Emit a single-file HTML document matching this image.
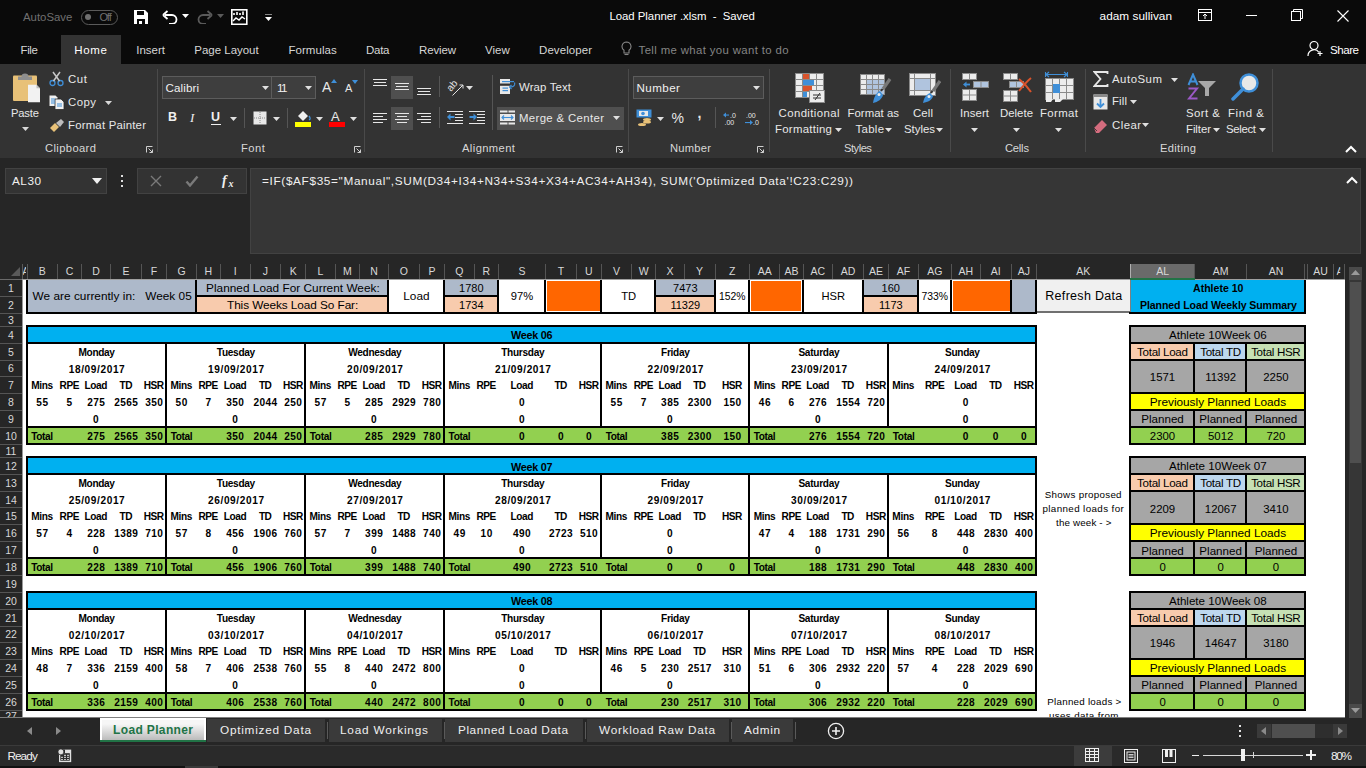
<!DOCTYPE html>
<html><head><meta charset="utf-8"><title>Load Planner .xlsm - Saved</title>
<style>
html,body{margin:0;padding:0;}
body{width:1366px;height:768px;overflow:hidden;position:relative;background:#262626;font-family:"Liberation Sans",sans-serif;}
.t{position:absolute;white-space:pre;}
.r{position:absolute;}
</style></head><body>
<div class="r" style="left:0.00px;top:0.00px;width:1366.00px;height:64.00px;background:#0a0a0a;"></div>
<div class="t" style="left:23.00px;top:11.16px;font-size:11.4px;line-height:13.68px;color:#707070;">AutoSave</div>
<div class="r" style="left:80.50px;top:9.50px;width:37.00px;height:15.00px;background:transparent;border:1px solid #5a5a5a;border-radius:8px;box-sizing:border-box;"></div>
<div class="r" style="left:85.00px;top:14.00px;width:6.00px;height:6.00px;background:#707070;border-radius:50%;"></div>
<div class="t" style="left:99.40px;top:10.90px;font-size:11px;line-height:13.20px;color:#707070;letter-spacing:-1.085px;">Off</div>
<svg class="r" style="left:133px;top:9px" width="16" height="16" viewBox="0 0 16 16"><path d="M1 1h11l3 3v11H1z" fill="#fff"/><rect x="4" y="2" width="7" height="4" fill="#0a0a0a"/><rect x="4" y="10" width="8" height="5" fill="#0a0a0a"/><rect x="6" y="12" width="3" height="3" fill="#fff"/></svg>
<svg class="r" style="left:162px;top:10px" width="16" height="14" viewBox="0 0 16 14"><path d="M3 5h7a4.5 4.5 0 0 1 0 9H7" stroke="#fff" stroke-width="1.8" fill="none"/><path d="M1 5l4.5-4M1 5l4.5 4" stroke="#fff" stroke-width="1.8" fill="none"/></svg>
<svg class="r" style="left:182px;top:14px" width="7" height="4" viewBox="0 0 7 4"><path d="M0 0h7L3.5 4z" fill="#fff"/></svg>
<svg class="r" style="left:197px;top:10px" width="16" height="14" viewBox="0 0 16 14"><path d="M13 5H6a4.5 4.5 0 0 0 0 9h3" stroke="#5a5a5a" stroke-width="1.8" fill="none"/><path d="M15 5l-4.5-4M15 5l-4.5 4" stroke="#5a5a5a" stroke-width="1.8" fill="none"/></svg>
<svg class="r" style="left:217px;top:14px" width="7" height="4" viewBox="0 0 7 4"><path d="M0 0h7L3.5 4z" fill="#5a5a5a"/></svg>
<svg class="r" style="left:231px;top:9px" width="17" height="16" viewBox="0 0 17 16"><rect x="0.8" y="0.8" width="15" height="14.5" fill="none" stroke="#fff" stroke-width="1.6"/><path d="M3 6V4M6 6V3M9 6V4M12 6V2.5" stroke="#fff" stroke-width="1.6"/><path d="M2 12l3-3 3 2 3-3 3 2" stroke="#fff" stroke-width="1.4" fill="none"/></svg>
<svg class="r" style="left:265px;top:14px" width="7" height="7" viewBox="0 0 7 7"><path d="M0 0h7" stroke="#fff" stroke-width="1"/><path d="M0 3h7L3.5 7z" fill="#fff"/></svg>
<div class="t" style="left:609.40px;top:9.66px;font-size:11.4px;line-height:13.68px;color:#ffffff;letter-spacing:-0.029px;">Load Planner .xlsm  -  Saved</div>
<div class="t" style="left:1099.60px;top:9.42px;font-size:11.8px;line-height:14.16px;color:#ffffff;letter-spacing:0.021px;">adam sullivan</div>
<svg class="r" style="left:1198px;top:9px" width="14" height="12" viewBox="0 0 14 12"><rect x="0.5" y="0.5" width="13" height="11" fill="none" stroke="#fff"/><path d="M0.5 3.5h13M7 10V5M5 7l2-2 2 2" stroke="#fff" fill="none"/></svg>
<div class="r" style="left:1245.50px;top:15.00px;width:11.00px;height:1.00px;background:#fff;"></div>
<svg class="r" style="left:1291px;top:9px" width="12" height="12" viewBox="0 0 12 12"><rect x="0.5" y="2.5" width="9" height="9" fill="none" stroke="#fff"/><path d="M2.5 2.5V0.5h9v9h-2" stroke="#fff" fill="none"/></svg>
<svg class="r" style="left:1337px;top:10px" width="12" height="12" viewBox="0 0 12 12"><path d="M0.5 0.5l11 11M11.5 0.5l-11 11" stroke="#fff" stroke-width="1.1"/></svg>
<div class="r" style="left:61.00px;top:35.00px;width:60.00px;height:29.00px;background:#333333;"></div>
<div class="t" style="left:20.50px;top:43.90px;font-size:11.5px;line-height:13.80px;color:#d6d6d6;letter-spacing:-0.377px;">File</div>
<div class="t" style="left:74.20px;top:43.90px;font-size:11.5px;line-height:13.80px;color:#ffffff;letter-spacing:0.708px;">Home</div>
<div class="t" style="left:136.30px;top:43.90px;font-size:11.5px;line-height:13.80px;color:#d6d6d6;letter-spacing:-0.012px;">Insert</div>
<div class="t" style="left:194.30px;top:43.90px;font-size:11.5px;line-height:13.80px;color:#d6d6d6;letter-spacing:-0.018px;">Page Layout</div>
<div class="t" style="left:288.40px;top:43.90px;font-size:11.5px;line-height:13.80px;color:#d6d6d6;letter-spacing:0.053px;">Formulas</div>
<div class="t" style="left:366.00px;top:43.90px;font-size:11.5px;line-height:13.80px;color:#d6d6d6;letter-spacing:-0.264px;">Data</div>
<div class="t" style="left:419.00px;top:43.90px;font-size:11.5px;line-height:13.80px;color:#d6d6d6;letter-spacing:-0.141px;">Review</div>
<div class="t" style="left:485.00px;top:43.90px;font-size:11.5px;line-height:13.80px;color:#d6d6d6;letter-spacing:0.027px;">View</div>
<div class="t" style="left:539.00px;top:43.90px;font-size:11.5px;line-height:13.80px;color:#d6d6d6;letter-spacing:0.072px;">Developer</div>
<svg class="r" style="left:621px;top:41px" width="11" height="16" viewBox="0 0 11 16"><path d="M5.5 1a4.5 4.5 0 0 0-2.5 8.2V12h5V9.2A4.5 4.5 0 0 0 5.5 1z" fill="none" stroke="#858585" stroke-width="1.1"/><path d="M3.5 13.5h4" stroke="#858585" stroke-width="1.1"/></svg>
<div class="t" style="left:638.60px;top:43.96px;font-size:11.4px;line-height:13.68px;color:#858585;letter-spacing:0.362px;">Tell me what you want to do</div>
<svg class="r" style="left:1307px;top:40px" width="17" height="17" viewBox="0 0 17 17"><circle cx="7" cy="5.5" r="4" fill="none" stroke="#fff" stroke-width="1.2"/><path d="M1 16a6 6 0 0 1 11-3.5" fill="none" stroke="#fff" stroke-width="1.2"/><path d="M13 11v5M10.5 13.5h5" stroke="#fff" stroke-width="1.2"/></svg>
<div class="t" style="left:1330.00px;top:42.54px;font-size:11.6px;line-height:13.92px;color:#ffffff;letter-spacing:-0.489px;">Share</div>
<div class="r" style="left:0.00px;top:64.00px;width:1366.00px;height:93.50px;background:#333333;"></div>
<div class="r" style="left:157.10px;top:69.00px;width:1.00px;height:83.00px;background:#4a4a4a;"></div>
<div class="r" style="left:363.80px;top:69.00px;width:1.00px;height:83.00px;background:#4a4a4a;"></div>
<div class="r" style="left:628.10px;top:69.00px;width:1.00px;height:83.00px;background:#4a4a4a;"></div>
<div class="r" style="left:768.50px;top:69.00px;width:1.00px;height:83.00px;background:#4a4a4a;"></div>
<div class="r" style="left:949.50px;top:69.00px;width:1.00px;height:83.00px;background:#4a4a4a;"></div>
<div class="r" style="left:1085.20px;top:69.00px;width:1.00px;height:83.00px;background:#4a4a4a;"></div>
<div class="r" style="left:1272.00px;top:69.00px;width:1.00px;height:83.00px;background:#4a4a4a;"></div>
<div class="t" style="left:45.00px;top:142.28px;font-size:11.2px;line-height:13.44px;color:#d8d8d8;letter-spacing:0.382px;">Clipboard</div>
<div class="t" style="left:241.00px;top:142.28px;font-size:11.2px;line-height:13.44px;color:#d8d8d8;letter-spacing:0.530px;">Font</div>
<div class="t" style="left:462.00px;top:142.28px;font-size:11.2px;line-height:13.44px;color:#d8d8d8;letter-spacing:0.399px;">Alignment</div>
<div class="t" style="left:670.00px;top:142.28px;font-size:11.2px;line-height:13.44px;color:#d8d8d8;letter-spacing:0.233px;">Number</div>
<div class="t" style="left:844.00px;top:142.28px;font-size:11.2px;line-height:13.44px;color:#d8d8d8;letter-spacing:-0.500px;">Styles</div>
<div class="t" style="left:1005.00px;top:142.28px;font-size:11.2px;line-height:13.44px;color:#d8d8d8;letter-spacing:-0.224px;">Cells</div>
<div class="t" style="left:1160.00px;top:142.28px;font-size:11.2px;line-height:13.44px;color:#d8d8d8;letter-spacing:0.292px;">Editing</div>
<svg class="r" style="left:146px;top:146px" width="7" height="7" viewBox="0 0 7 7"><path d="M0.5 6.5V0.5h6" stroke="#cfcfcf" fill="none"/><path d="M2.5 2.5l4 4M6.5 3.5v3h-3" stroke="#cfcfcf" fill="none"/></svg>
<svg class="r" style="left:354px;top:146px" width="7" height="7" viewBox="0 0 7 7"><path d="M0.5 6.5V0.5h6" stroke="#cfcfcf" fill="none"/><path d="M2.5 2.5l4 4M6.5 3.5v3h-3" stroke="#cfcfcf" fill="none"/></svg>
<svg class="r" style="left:616px;top:146px" width="7" height="7" viewBox="0 0 7 7"><path d="M0.5 6.5V0.5h6" stroke="#cfcfcf" fill="none"/><path d="M2.5 2.5l4 4M6.5 3.5v3h-3" stroke="#cfcfcf" fill="none"/></svg>
<svg class="r" style="left:757px;top:146px" width="7" height="7" viewBox="0 0 7 7"><path d="M0.5 6.5V0.5h6" stroke="#cfcfcf" fill="none"/><path d="M2.5 2.5l4 4M6.5 3.5v3h-3" stroke="#cfcfcf" fill="none"/></svg>
<svg class="r" style="left:12px;top:72px" width="30" height="32" viewBox="0 0 30 32"><rect x="1" y="3.6" width="24" height="25.4" rx="1" fill="#e8c178"/><path d="M6 8V4.5h3.5a3.5 3 0 0 1 7 0H20V8z" fill="#8e8e8e"/><path d="M16 12.7h8.5l3.5 3.5v14.1H16z" fill="#f2f2f2"/><path d="M24.5 12.7v3.5h3.5z" fill="#bdbdbd"/></svg>
<div class="t" style="left:11.00px;top:107.28px;font-size:11.2px;line-height:13.44px;color:#e8e8e8;letter-spacing:-0.160px;">Paste</div>
<svg class="r" style="left:22px;top:127px" width="7" height="4" viewBox="0 0 7 4"><path d="M0 0h7L3.5 4z" fill="#d8d8d8"/></svg>
<svg class="r" style="left:49px;top:71px" width="16" height="16" viewBox="0 0 16 16"><circle cx="3.5" cy="12" r="2.5" fill="none" stroke="#3f8fd8" stroke-width="1.3"/><circle cx="11.5" cy="12" r="2.5" fill="none" stroke="#3f8fd8" stroke-width="1.3"/><path d="M4.5 10L11 1M10.5 10L4 1" stroke="#c8c8c8" stroke-width="1.5"/></svg>
<div class="t" style="left:68.00px;top:73.16px;font-size:11.4px;line-height:13.68px;color:#e8e8e8;letter-spacing:0.630px;">Cut</div>
<svg class="r" style="left:49px;top:95px" width="16" height="15" viewBox="0 0 16 15"><path d="M0.5 0.5h6l2 2V11H0.5z" fill="#f0f0f0"/><path d="M6 4h6l3 3v7.5H6z" fill="#f0f0f0" stroke="#2a2a2a" stroke-width="0.8"/><path d="M2 4h4M2 6h4M2 8h4M8 9h5M8 11h5" stroke="#3f8fd8" stroke-width="1"/></svg>
<div class="t" style="left:68.00px;top:96.16px;font-size:11.4px;line-height:13.68px;color:#e8e8e8;letter-spacing:0.462px;">Copy</div>
<svg class="r" style="left:105px;top:101px" width="7" height="4" viewBox="0 0 7 4"><path d="M0 0h7L3.5 4z" fill="#d8d8d8"/></svg>
<svg class="r" style="left:49px;top:118px" width="16" height="15" viewBox="0 0 16 15"><path d="M1 10l5-5 4 4-5 5z" fill="#e8c178"/><path d="M7 5l5-4 3 3-4 5z" fill="#bdbdbd"/></svg>
<div class="t" style="left:68.00px;top:119.16px;font-size:11.4px;line-height:13.68px;color:#e8e8e8;letter-spacing:0.200px;">Format Painter</div>
<div class="r" style="left:162.20px;top:76.30px;width:109.90px;height:22.30px;background:#3e3e3e;border:1px solid #5c5c5c;box-sizing:border-box;"></div>
<div class="r" style="left:272.10px;top:76.30px;width:43.50px;height:22.30px;background:#3e3e3e;border:1px solid #5c5c5c;border-left:none;box-sizing:border-box;"></div>
<div class="t" style="left:165.60px;top:81.04px;font-size:11.6px;line-height:13.92px;color:#f0f0f0;letter-spacing:0.087px;">Calibri</div>
<div class="t" style="left:277.00px;top:81.04px;font-size:11.6px;line-height:13.92px;color:#f0f0f0;letter-spacing:-1.542px;">11</div>
<svg class="r" style="left:262px;top:86px" width="7" height="4" viewBox="0 0 7 4"><path d="M0 0h7L3.5 4z" fill="#e0e0e0"/></svg>
<svg class="r" style="left:305px;top:86px" width="7" height="4" viewBox="0 0 7 4"><path d="M0 0h7L3.5 4z" fill="#e0e0e0"/></svg>
<div class="t" style="left:322.00px;top:79.10px;font-size:14px;line-height:16.80px;color:#e8e8e8;">A</div>
<svg class="r" style="left:331px;top:79px" width="6" height="4" viewBox="0 0 6 4"><path d="M0 4h6L3 0z" fill="#3f8fd8"/></svg>
<div class="t" style="left:345.00px;top:82.40px;font-size:11px;line-height:13.20px;color:#e8e8e8;">A</div>
<svg class="r" style="left:352px;top:80px" width="6" height="4" viewBox="0 0 6 4"><path d="M0 0h6L3 4z" fill="#3f8fd8"/></svg>
<div class="t" style="left:168.00px;top:110.00px;font-size:12.5px;line-height:15.00px;color:#f0f0f0;font-weight:bold;">B</div>
<div class="t" style="left:190.00px;top:109.70px;font-size:13px;line-height:15.60px;color:#f0f0f0;font-family:'Liberation Serif',serif;font-style:italic;">I</div>
<div class="t" style="left:211.00px;top:110.00px;font-size:12.5px;line-height:15.00px;color:#f0f0f0;font-weight:bold;">U</div>
<div class="r" style="left:211.00px;top:124.00px;width:10.00px;height:1.20px;background:#f0f0f0;"></div>
<svg class="r" style="left:230px;top:117px" width="7" height="4" viewBox="0 0 7 4"><path d="M0 0h7L3.5 4z" fill="#e0e0e0"/></svg>
<svg class="r" style="left:273px;top:117px" width="7" height="4" viewBox="0 0 7 4"><path d="M0 0h7L3.5 4z" fill="#e0e0e0"/></svg>
<svg class="r" style="left:316px;top:117px" width="7" height="4" viewBox="0 0 7 4"><path d="M0 0h7L3.5 4z" fill="#e0e0e0"/></svg>
<svg class="r" style="left:350px;top:117px" width="7" height="4" viewBox="0 0 7 4"><path d="M0 0h7L3.5 4z" fill="#e0e0e0"/></svg>
<div class="r" style="left:244.00px;top:108.00px;width:1.00px;height:20.00px;background:#555;"></div>
<div class="r" style="left:287.00px;top:108.00px;width:1.00px;height:20.00px;background:#555;"></div>
<svg class="r" style="left:253px;top:111px" width="14" height="14" viewBox="0 0 14 14"><rect x="0.5" y="0.5" width="13" height="13" fill="#e8e8e8"/><path d="M7 1v12M1 7h12" stroke="#8a8a8a" stroke-dasharray="1 1"/></svg>
<svg class="r" style="left:295px;top:109px" width="18" height="18" viewBox="0 0 18 18"><path d="M3 7l5-5 5 5-5 5z" fill="#f0f0f0"/><path d="M14 7c1.5 2 1.5 3 0 4" stroke="#3f8fd8" stroke-width="1.3" fill="none"/></svg>
<div class="r" style="left:295.00px;top:122.00px;width:16.00px;height:4.50px;background:#ffff00;"></div>
<div class="t" style="left:331.00px;top:108.70px;font-size:13px;line-height:15.60px;color:#e8e8e8;">A</div>
<div class="r" style="left:329.00px;top:122.00px;width:16.00px;height:4.50px;background:#ff0000;"></div>
<div class="r" style="left:391.00px;top:76.00px;width:22.00px;height:23.00px;background:#4f4f4f;"></div>
<div class="r" style="left:391.00px;top:107.00px;width:22.00px;height:23.00px;background:#4f4f4f;"></div>
<div class="r" style="left:373.00px;top:79.00px;width:14.00px;height:1.00px;background:#e6e6e6;"></div>
<div class="r" style="left:374.00px;top:82.00px;width:12.00px;height:1.00px;background:#e6e6e6;"></div>
<div class="r" style="left:373.00px;top:85.00px;width:14.00px;height:1.00px;background:#e6e6e6;"></div>
<div class="r" style="left:395.00px;top:83.00px;width:14.00px;height:1.00px;background:#e6e6e6;"></div>
<div class="r" style="left:396.00px;top:86.00px;width:12.00px;height:1.00px;background:#e6e6e6;"></div>
<div class="r" style="left:395.00px;top:89.00px;width:14.00px;height:1.00px;background:#e6e6e6;"></div>
<div class="r" style="left:417.00px;top:88.00px;width:14.00px;height:1.00px;background:#e6e6e6;"></div>
<div class="r" style="left:418.00px;top:91.00px;width:12.00px;height:1.00px;background:#e6e6e6;"></div>
<div class="r" style="left:417.00px;top:94.00px;width:14.00px;height:1.00px;background:#e6e6e6;"></div>
<div class="r" style="left:373.00px;top:113.00px;width:14.00px;height:1.00px;background:#e6e6e6;"></div>
<div class="r" style="left:373.00px;top:116.00px;width:10.00px;height:1.00px;background:#e6e6e6;"></div>
<div class="r" style="left:373.00px;top:119.00px;width:14.00px;height:1.00px;background:#e6e6e6;"></div>
<div class="r" style="left:373.00px;top:122.00px;width:10.00px;height:1.00px;background:#e6e6e6;"></div>
<div class="r" style="left:395.00px;top:113.00px;width:14.00px;height:1.00px;background:#e6e6e6;"></div>
<div class="r" style="left:397.00px;top:116.00px;width:10.00px;height:1.00px;background:#e6e6e6;"></div>
<div class="r" style="left:395.00px;top:119.00px;width:14.00px;height:1.00px;background:#e6e6e6;"></div>
<div class="r" style="left:397.00px;top:122.00px;width:10.00px;height:1.00px;background:#e6e6e6;"></div>
<div class="r" style="left:417.00px;top:113.00px;width:14.00px;height:1.00px;background:#e6e6e6;"></div>
<div class="r" style="left:421.00px;top:116.00px;width:10.00px;height:1.00px;background:#e6e6e6;"></div>
<div class="r" style="left:417.00px;top:119.00px;width:14.00px;height:1.00px;background:#e6e6e6;"></div>
<div class="r" style="left:421.00px;top:122.00px;width:10.00px;height:1.00px;background:#e6e6e6;"></div>
<div class="r" style="left:439.00px;top:76.00px;width:1.00px;height:21.00px;background:#555;"></div>
<div class="r" style="left:439.00px;top:107.00px;width:1.00px;height:21.00px;background:#555;"></div>
<svg class="r" style="left:447px;top:79px" width="18" height="17" viewBox="0 0 18 17"><text x="0" y="0" font-size="10" fill="#e6e6e6" font-family="Liberation Sans" transform="translate(4 13) rotate(-50)">ab</text><path d="M5.5 16.5L16 6M12.5 6H16v3.5" stroke="#e6e6e6" stroke-width="1" fill="none"/></svg>
<svg class="r" style="left:466px;top:86px" width="7" height="4" viewBox="0 0 7 4"><path d="M0 0h7L3.5 4z" fill="#e0e0e0"/></svg>
<div class="r" style="left:447.00px;top:111.00px;width:16.00px;height:1.00px;background:#e6e6e6;"></div>
<div class="r" style="left:455.00px;top:114.00px;width:8.00px;height:1.00px;background:#e6e6e6;"></div>
<div class="r" style="left:455.00px;top:117.00px;width:8.00px;height:1.00px;background:#e6e6e6;"></div>
<div class="r" style="left:455.00px;top:120.00px;width:8.00px;height:1.00px;background:#e6e6e6;"></div>
<div class="r" style="left:447.00px;top:123.00px;width:16.00px;height:1.00px;background:#e6e6e6;"></div>
<div class="r" style="left:469.00px;top:111.00px;width:16.00px;height:1.00px;background:#e6e6e6;"></div>
<div class="r" style="left:477.00px;top:114.00px;width:8.00px;height:1.00px;background:#e6e6e6;"></div>
<div class="r" style="left:477.00px;top:117.00px;width:8.00px;height:1.00px;background:#e6e6e6;"></div>
<div class="r" style="left:477.00px;top:120.00px;width:8.00px;height:1.00px;background:#e6e6e6;"></div>
<div class="r" style="left:469.00px;top:123.00px;width:16.00px;height:1.00px;background:#e6e6e6;"></div>
<svg class="r" style="left:447px;top:113px" width="8" height="8" viewBox="0 0 8 8"><path d="M0 4l3.5-3.5v7z" fill="#3f8fd8"/><rect x="3" y="3" width="4.5" height="2" fill="#3f8fd8"/></svg>
<svg class="r" style="left:469px;top:113px" width="8" height="8" viewBox="0 0 8 8"><path d="M8 4L4.5 0.5v7z" fill="#3f8fd8"/><rect x="0.5" y="3" width="4.5" height="2" fill="#3f8fd8"/></svg>
<div class="r" style="left:492.00px;top:75.00px;width:1.00px;height:55.00px;background:#555;"></div>
<svg class="r" style="left:500px;top:78px" width="16" height="17" viewBox="0 0 16 17"><rect x="0" y="1" width="10" height="4.5" fill="#e8e8e8"/><rect x="2" y="3" width="12" height="1.2" fill="#3f8fd8"/><rect x="0" y="7.8" width="10" height="8.2" fill="#e8e8e8"/><rect x="2.5" y="9.5" width="5.5" height="1.2" fill="#3f8fd8"/><rect x="2.5" y="12" width="5.5" height="1.2" fill="#3f8fd8"/><path d="M14.5 4.5c1 2.5-0.5 4.5-4 4.5" stroke="#3f8fd8" stroke-width="1.2" fill="none"/><path d="M11.5 7l-2 2 2 2" stroke="#3f8fd8" stroke-width="1.2" fill="none"/></svg>
<div class="t" style="left:519.00px;top:81.16px;font-size:11.4px;line-height:13.68px;color:#e8e8e8;letter-spacing:0.137px;">Wrap Text</div>
<div class="r" style="left:497.00px;top:107.00px;width:127.00px;height:23.00px;background:#4f4f4f;"></div>
<svg class="r" style="left:500px;top:110px" width="15" height="15" viewBox="0 0 15 15"><rect x="0" y="0.5" width="7.5" height="2" fill="#e8e8e8"/><rect x="8.5" y="0.5" width="6.5" height="2" fill="#e8e8e8"/><rect x="0" y="4" width="15" height="7" fill="#e8e8e8"/><path d="M2 7.5h11" stroke="#3f8fd8" stroke-width="1.1"/><path d="M4 5.5l-2 2 2 2M11 5.5l2 2-2 2" stroke="#3f8fd8" stroke-width="1.1" fill="none"/><rect x="0" y="12.5" width="7.5" height="2" fill="#e8e8e8"/><rect x="8.5" y="12.5" width="6.5" height="2" fill="#e8e8e8"/></svg>
<div class="t" style="left:519.00px;top:111.66px;font-size:11.4px;line-height:13.68px;color:#e8e8e8;letter-spacing:0.348px;">Merge &amp; Center</div>
<svg class="r" style="left:613px;top:116px" width="7" height="4" viewBox="0 0 7 4"><path d="M0 0h7L3.5 4z" fill="#e0e0e0"/></svg>
<div class="r" style="left:633.20px;top:76.30px;width:130.50px;height:22.50px;background:#3e3e3e;border:1px solid #5c5c5c;box-sizing:border-box;"></div>
<div class="t" style="left:636.50px;top:81.04px;font-size:11.6px;line-height:13.92px;color:#f0f0f0;letter-spacing:0.448px;">Number</div>
<svg class="r" style="left:753px;top:86px" width="7" height="4" viewBox="0 0 7 4"><path d="M0 0h7L3.5 4z" fill="#e0e0e0"/></svg>
<svg class="r" style="left:636px;top:109px" width="17" height="18" viewBox="0 0 17 18"><rect x="0.5" y="0.5" width="15" height="8" fill="#3f8fd8"/><rect x="3" y="2" width="9" height="5" fill="#e8e8e8"/><circle cx="7" cy="4.5" r="1.8" fill="#3f8fd8"/><ellipse cx="11" cy="10.5" rx="4" ry="1.6" fill="#e8c178"/><ellipse cx="11" cy="13" rx="4" ry="1.6" fill="#e8c178"/><ellipse cx="6" cy="15.5" rx="4" ry="1.6" fill="#e8c178"/></svg>
<svg class="r" style="left:657px;top:117px" width="7" height="4" viewBox="0 0 7 4"><path d="M0 0h7L3.5 4z" fill="#e0e0e0"/></svg>
<div class="t" style="left:671.50px;top:110.10px;font-size:14px;line-height:16.80px;color:#e8e8e8;">%</div>
<div class="t" style="left:697.50px;top:104.60px;font-size:14px;line-height:16.80px;color:#e8e8e8;font-weight:bold;">,</div>
<div class="r" style="left:715.00px;top:107.00px;width:1.00px;height:21.00px;background:#555;"></div>
<svg class="r" style="left:722px;top:111px" width="16" height="14" viewBox="0 0 16 14"><path d="M1 4l3-2.5v5z" fill="#3f8fd8"/><rect x="3" y="3.5" width="4" height="1.1" fill="#3f8fd8"/><text x="8" y="7" font-size="7" fill="#e8e8e8" font-family="Liberation Sans">.0</text><text x="2.5" y="14" font-size="7" fill="#e8e8e8" font-family="Liberation Sans">.00</text></svg>
<svg class="r" style="left:744px;top:111px" width="16" height="14" viewBox="0 0 16 14"><text x="2" y="7" font-size="7" fill="#e8e8e8" font-family="Liberation Sans">.00</text><path d="M7 11.5l-3-2.5v5z" transform="translate(2 0)" fill="#3f8fd8"/><rect x="1" y="11" width="5" height="1.1" fill="#3f8fd8"/><text x="9" y="14" font-size="7" fill="#e8e8e8" font-family="Liberation Sans">.0</text></svg>
<svg class="r" style="left:794px;top:72px" width="33" height="32" viewBox="0 0 33 32"><rect x="1" y="1" width="29" height="25" fill="#8a8a8a"/><rect x="2" y="2" width="6" height="5" fill="#ececec"/><rect x="2" y="8" width="6" height="5" fill="#ececec"/><rect x="2" y="14" width="6" height="5" fill="#ececec"/><rect x="2" y="20" width="6" height="5" fill="#ececec"/><rect x="9" y="2" width="6" height="5" fill="#ececec"/><rect x="9" y="8" width="6" height="5" fill="#ececec"/><rect x="9" y="14" width="6" height="5" fill="#ececec"/><rect x="9" y="20" width="6" height="5" fill="#ececec"/><rect x="16" y="2" width="6" height="5" fill="#ececec"/><rect x="16" y="8" width="6" height="5" fill="#ececec"/><rect x="16" y="14" width="6" height="5" fill="#ececec"/><rect x="16" y="20" width="6" height="5" fill="#ececec"/><rect x="23" y="2" width="6" height="5" fill="#ececec"/><rect x="23" y="8" width="6" height="5" fill="#ececec"/><rect x="23" y="14" width="6" height="5" fill="#ececec"/><rect x="23" y="20" width="6" height="5" fill="#ececec"/><rect x="9" y="2" width="6" height="5" fill="#d9532b"/><rect x="9" y="8" width="11" height="5" fill="#3f8fd8"/><rect x="9" y="14" width="9" height="5" fill="#d9532b"/><rect x="9" y="20" width="4" height="5" fill="#3f8fd8"/><rect x="15" y="18" width="16" height="13" fill="#8a8a8a"/><rect x="16" y="19" width="14" height="11" fill="#ececec"/><path d="M19 23h8M19 26h8M26 21l-5 7" stroke="#333" stroke-width="1" fill="none"/></svg>
<div class="t" style="left:778.60px;top:107.16px;font-size:11.4px;line-height:13.68px;color:#e8e8e8;letter-spacing:0.386px;">Conditional</div>
<div class="t" style="left:775.00px;top:123.16px;font-size:11.4px;line-height:13.68px;color:#e8e8e8;letter-spacing:0.279px;">Formatting</div>
<svg class="r" style="left:835px;top:128px" width="7" height="4" viewBox="0 0 7 4"><path d="M0 0h7L3.5 4z" fill="#e0e0e0"/></svg>
<svg class="r" style="left:859px;top:73px" width="33" height="32" viewBox="0 0 33 32"><rect x="1" y="1" width="25" height="21" fill="#8a8a8a"/><rect x="2" y="2" width="5" height="4" fill="#ececec"/><rect x="2" y="7" width="5" height="4" fill="#ececec"/><rect x="2" y="12" width="5" height="4" fill="#ececec"/><rect x="2" y="17" width="5" height="4" fill="#ececec"/><rect x="8" y="2" width="5" height="4" fill="#ececec"/><rect x="8" y="7" width="5" height="4" fill="#ececec"/><rect x="8" y="12" width="5" height="4" fill="#ececec"/><rect x="8" y="17" width="5" height="4" fill="#ececec"/><rect x="14" y="2" width="5" height="4" fill="#ececec"/><rect x="14" y="7" width="5" height="4" fill="#ececec"/><rect x="14" y="12" width="5" height="4" fill="#ececec"/><rect x="14" y="17" width="5" height="4" fill="#ececec"/><rect x="20" y="2" width="5" height="4" fill="#ececec"/><rect x="20" y="7" width="5" height="4" fill="#ececec"/><rect x="20" y="12" width="5" height="4" fill="#ececec"/><rect x="20" y="17" width="5" height="4" fill="#ececec"/><rect x="8" y="7" width="17" height="14" fill="#b0c4de"/><path d="M8 11.5h17M8 16.5h17M13.5 7v14M19.5 7v14" stroke="#8a8a8a" stroke-width="1"/><path d="M31 6l-7 10" stroke="#777" stroke-width="3.2"/><path d="M23.5 16l-1.5 2" stroke="#333" stroke-width="2"/><path d="M21 18c-3 1-6 5-7 12 5-1 9-4 10-8z" fill="#3f8fd8"/><circle cx="20" cy="21.5" r="1.5" fill="#ececec"/></svg>
<div class="t" style="left:847.50px;top:107.16px;font-size:11.4px;line-height:13.68px;color:#e8e8e8;letter-spacing:0.023px;">Format as</div>
<div class="t" style="left:855.60px;top:123.16px;font-size:11.4px;line-height:13.68px;color:#e8e8e8;letter-spacing:0.286px;">Table</div>
<svg class="r" style="left:885px;top:128px" width="7" height="4" viewBox="0 0 7 4"><path d="M0 0h7L3.5 4z" fill="#e0e0e0"/></svg>
<svg class="r" style="left:908px;top:72px" width="33" height="32" viewBox="0 0 33 32"><rect x="1" y="1" width="27" height="23" fill="#8a8a8a"/><rect x="2" y="2" width="25" height="21" fill="#ececec"/><path d="M2 6.5h25M2 18.5h25M6.5 2v21M22.5 2v21" stroke="#8a8a8a" stroke-width="1"/><rect x="7" y="7" width="15" height="11" fill="#b0c4de"/><path d="M32 9l-7 10" stroke="#777" stroke-width="3.2"/><path d="M24.5 19l-1.5 2" stroke="#333" stroke-width="2"/><path d="M22 21c-3 1-6 4-7 10 5-1 9-3 10-7z" fill="#3f8fd8"/><circle cx="21" cy="24.5" r="1.5" fill="#ececec"/></svg>
<div class="t" style="left:913.00px;top:107.16px;font-size:11.4px;line-height:13.68px;color:#e8e8e8;letter-spacing:0.120px;">Cell</div>
<div class="t" style="left:904.00px;top:123.16px;font-size:11.4px;line-height:13.68px;color:#e8e8e8;letter-spacing:-0.009px;">Styles</div>
<svg class="r" style="left:936px;top:128px" width="7" height="4" viewBox="0 0 7 4"><path d="M0 0h7L3.5 4z" fill="#e0e0e0"/></svg>
<svg class="r" style="left:961px;top:72px" width="30" height="30" viewBox="0 0 30 30"><rect x="1" y="1" width="15" height="7" fill="#8a8a8a"/><rect x="2" y="2" width="6" height="5" fill="#ececec"/><rect x="9" y="2" width="6" height="5" fill="#ececec"/><rect x="12" y="9" width="16.0" height="7" fill="#8a8a8a"/><rect x="13.0" y="10" width="6.5" height="5" fill="#b0c4de"/><rect x="20.5" y="10" width="6.5" height="5" fill="#b0c4de"/><path d="M2 12.5l3.5-3v6z" fill="#3f8fd8"/><rect x="4" y="11.6" width="5" height="1.8" fill="#3f8fd8"/><rect x="1" y="17" width="15" height="12.0" fill="#8a8a8a"/><rect x="2" y="18.0" width="6" height="4.5" fill="#ececec"/><rect x="2" y="23.5" width="6" height="4.5" fill="#ececec"/><rect x="9" y="18.0" width="6" height="4.5" fill="#ececec"/><rect x="9" y="23.5" width="6" height="4.5" fill="#ececec"/></svg>
<div class="t" style="left:960.00px;top:107.16px;font-size:11.4px;line-height:13.68px;color:#e8e8e8;letter-spacing:0.098px;">Insert</div>
<svg class="r" style="left:1002px;top:72px" width="32" height="30" viewBox="0 0 32 30"><rect x="1" y="1" width="15" height="7" fill="#8a8a8a"/><rect x="2" y="2" width="6" height="5" fill="#ececec"/><rect x="9" y="2" width="6" height="5" fill="#ececec"/><rect x="7" y="9" width="15" height="7" fill="#8a8a8a"/><rect x="8" y="10" width="6" height="5" fill="#b0c4de"/><rect x="15" y="10" width="6" height="5" fill="#b0c4de"/><path d="M17 7c4 3 8 7 12 13M29 6c-4 3-8 8-12 13" stroke="#d9532b" stroke-width="2" fill="none"/><rect x="1" y="18" width="15" height="12.0" fill="#8a8a8a"/><rect x="2" y="19.0" width="6" height="4.5" fill="#ececec"/><rect x="2" y="24.5" width="6" height="4.5" fill="#ececec"/><rect x="9" y="19.0" width="6" height="4.5" fill="#ececec"/><rect x="9" y="24.5" width="6" height="4.5" fill="#ececec"/></svg>
<div class="t" style="left:1000.00px;top:107.16px;font-size:11.4px;line-height:13.68px;color:#e8e8e8;letter-spacing:0.009px;">Delete</div>
<svg class="r" style="left:1044px;top:71px" width="30" height="32" viewBox="0 0 30 32"><path d="M1.5 1v5M23.5 1v5M2 3.5h21M2 3.5l3-2.5M2 3.5l3 2.5M23 3.5l-3-2.5M23 3.5l-3 2.5" stroke="#3f8fd8" stroke-width="1.1" fill="none"/><rect x="1" y="7" width="29" height="22" fill="#8a8a8a"/><rect x="2" y="8" width="6" height="6" fill="#ececec"/><rect x="2" y="15" width="6" height="6" fill="#ececec"/><rect x="2" y="22" width="6" height="6" fill="#ececec"/><rect x="9" y="8" width="6" height="6" fill="#ececec"/><rect x="9" y="15" width="6" height="6" fill="#ececec"/><rect x="9" y="22" width="6" height="6" fill="#ececec"/><rect x="16" y="8" width="6" height="6" fill="#ececec"/><rect x="16" y="15" width="6" height="6" fill="#ececec"/><rect x="16" y="22" width="6" height="6" fill="#ececec"/><rect x="23" y="8" width="6" height="6" fill="#ececec"/><rect x="23" y="15" width="6" height="6" fill="#ececec"/><rect x="23" y="22" width="6" height="6" fill="#ececec"/><rect x="9" y="13" width="7" height="9" fill="#3f8fd8"/><path d="M2 28h7l-2 3H2zM11 28h8l-3 3h-5z" fill="#ececec"/></svg>
<div class="t" style="left:1040.00px;top:107.16px;font-size:11.4px;line-height:13.68px;color:#e8e8e8;letter-spacing:0.379px;">Format</div>
<svg class="r" style="left:971px;top:128px" width="7" height="4" viewBox="0 0 7 4"><path d="M0 0h7L3.5 4z" fill="#e0e0e0"/></svg>
<svg class="r" style="left:1013px;top:128px" width="7" height="4" viewBox="0 0 7 4"><path d="M0 0h7L3.5 4z" fill="#e0e0e0"/></svg>
<svg class="r" style="left:1055px;top:128px" width="7" height="4" viewBox="0 0 7 4"><path d="M0 0h7L3.5 4z" fill="#e0e0e0"/></svg>
<svg class="r" style="left:1093px;top:71px" width="16" height="16" viewBox="0 0 16 16"><path d="M14.5 3V1H1.5l6 7-6 7h13v-2" fill="none" stroke="#e8e8e8" stroke-width="1.8"/></svg>
<div class="t" style="left:1112.00px;top:73.16px;font-size:11.4px;line-height:13.68px;color:#e8e8e8;letter-spacing:0.518px;">AutoSum</div>
<svg class="r" style="left:1171px;top:78px" width="7" height="4" viewBox="0 0 7 4"><path d="M0 0h7L3.5 4z" fill="#e0e0e0"/></svg>
<svg class="r" style="left:1093px;top:94px" width="15" height="16" viewBox="0 0 15 16"><rect x="0.5" y="0.5" width="14" height="15" fill="#e8e8e8"/><rect x="0.5" y="0.5" width="14" height="2.5" fill="#8a8a8a"/><path d="M7.5 5v8M4 9.5l3.5 3.5 3.5-3.5" stroke="#3f8fd8" stroke-width="1.8" fill="none"/></svg>
<div class="t" style="left:1112.00px;top:95.16px;font-size:11.4px;line-height:13.68px;color:#e8e8e8;letter-spacing:0.146px;">Fill</div>
<svg class="r" style="left:1130px;top:100px" width="7" height="4" viewBox="0 0 7 4"><path d="M0 0h7L3.5 4z" fill="#e0e0e0"/></svg>
<svg class="r" style="left:1093px;top:118px" width="15" height="15" viewBox="0 0 15 15"><path d="M1 10l8-8 5 5-8 8H3z" fill="#d46c7e"/><path d="M1 10l3 3" stroke="#2a2a2a" stroke-width="0.8"/></svg>
<div class="t" style="left:1112.00px;top:118.66px;font-size:11.4px;line-height:13.68px;color:#e8e8e8;letter-spacing:0.439px;">Clear</div>
<svg class="r" style="left:1142px;top:123px" width="7" height="4" viewBox="0 0 7 4"><path d="M0 0h7L3.5 4z" fill="#e0e0e0"/></svg>
<svg class="r" style="left:1187px;top:73px" width="32" height="28" viewBox="0 0 32 28"><path d="M1.5 12L6 1.5 10.5 12M3 8.5h6" stroke="#3f8fd8" stroke-width="2" fill="none"/><path d="M1.5 15.5h8.5L2 25.5h8.5" stroke="#9b59c6" stroke-width="2" fill="none"/><path d="M11 8h18l-7 7v8h-4v-8z" fill="#a8a8a8"/></svg>
<div class="t" style="left:1186.00px;top:107.16px;font-size:11.4px;line-height:13.68px;color:#e8e8e8;letter-spacing:0.464px;">Sort &amp;</div>
<div class="t" style="left:1186.00px;top:123.16px;font-size:11.4px;line-height:13.68px;color:#e8e8e8;letter-spacing:-0.067px;">Filter</div>
<svg class="r" style="left:1213px;top:128px" width="7" height="4" viewBox="0 0 7 4"><path d="M0 0h7L3.5 4z" fill="#e0e0e0"/></svg>
<svg class="r" style="left:1231px;top:72px" width="30" height="30" viewBox="0 0 30 30"><circle cx="18" cy="11" r="8.5" fill="#e8e8e8" stroke="#3f8fd8" stroke-width="2.5"/><path d="M12 17L2 27" stroke="#3f8fd8" stroke-width="3.5" stroke-linecap="round"/></svg>
<div class="t" style="left:1228.00px;top:107.16px;font-size:11.4px;line-height:13.68px;color:#e8e8e8;letter-spacing:0.610px;">Find &amp;</div>
<div class="t" style="left:1226.00px;top:123.16px;font-size:11.4px;line-height:13.68px;color:#e8e8e8;letter-spacing:-0.337px;">Select</div>
<svg class="r" style="left:1259px;top:128px" width="7" height="4" viewBox="0 0 7 4"><path d="M0 0h7L3.5 4z" fill="#e0e0e0"/></svg>
<svg class="r" style="left:1345px;top:145px" width="12" height="8" viewBox="0 0 12 8"><path d="M1 7l5-5 5 5" stroke="#fff" stroke-width="2" fill="none"/></svg>
<div class="r" style="left:0.00px;top:157.50px;width:1366.00px;height:107.50px;background:#262626;"></div>
<div class="r" style="left:5.00px;top:168.00px;width:102.00px;height:26.00px;background:#333333;border:1px solid #424242;box-sizing:border-box;"></div>
<div class="t" style="left:12.00px;top:173.92px;font-size:11.8px;line-height:14.16px;color:#f0f0f0;letter-spacing:0.480px;">AL30</div>
<svg class="r" style="left:92px;top:178px" width="10" height="6" viewBox="0 0 10 6"><path d="M0 0h10L5 6z" fill="#f0f0f0"/></svg>
<div class="r" style="left:121.00px;top:175.00px;width:2.00px;height:2.00px;background:#e0e0e0;"></div>
<div class="r" style="left:121.00px;top:180.00px;width:2.00px;height:2.00px;background:#e0e0e0;"></div>
<div class="r" style="left:121.00px;top:185.00px;width:2.00px;height:2.00px;background:#e0e0e0;"></div>
<div class="r" style="left:137.00px;top:168.00px;width:110.00px;height:26.00px;background:#333333;border:1px solid #424242;box-sizing:border-box;"></div>
<svg class="r" style="left:150px;top:175px" width="12" height="12" viewBox="0 0 12 12"><path d="M1 1l10 10M11 1L1 11" stroke="#7a7a7a" stroke-width="1.4"/></svg>
<svg class="r" style="left:185px;top:175px" width="14" height="12" viewBox="0 0 14 12"><path d="M1.5 6.5l3.5 4 7.5-9" stroke="#7a7a7a" stroke-width="2.4" fill="none"/></svg>
<div class="t" style="left:222.00px;top:173.10px;font-size:14px;line-height:16.80px;color:#f0f0f0;font-family:'Liberation Serif',serif;font-style:italic;font-weight:bold;">f</div>
<div class="t" style="left:228.50px;top:177.50px;font-size:10px;line-height:12.00px;color:#f0f0f0;font-family:'Liberation Serif',serif;font-style:italic;font-weight:bold;">x</div>
<div class="r" style="left:250.00px;top:168.00px;width:1111.00px;height:85.50px;background:#363636;border:1px solid #424242;box-sizing:border-box;"></div>
<div class="t" style="left:262.00px;top:173.92px;font-size:11.8px;line-height:14.16px;color:#f0f0f0;letter-spacing:0.644px;">=IF($AF$35="Manual",SUM(D34+I34+N34+S34+X34+AC34+AH34), SUM('Optimized Data'!C23:C29))</div>
<svg class="r" style="left:1346px;top:176px" width="12" height="8" viewBox="0 0 12 8"><path d="M1 7l5-5 5 5" stroke="#fff" stroke-width="2" fill="none"/></svg>
<div class="r" style="left:0.00px;top:264.00px;width:1348.00px;height:15.00px;background:#262626;"></div>
<div class="r" style="left:0.00px;top:279.00px;width:22.00px;height:438.50px;background:#262626;"></div>
<div class="r" style="left:23.00px;top:279.00px;width:1321.50px;height:438.50px;background:#ffffff;"></div>
<div class="r" style="left:22.00px;top:279.00px;width:1.00px;height:438.50px;background:#9a9a9a;"></div>
<svg class="r" style="left:11px;top:267px" width="9" height="9" viewBox="0 0 9 9"><path d="M9 0v9H0z" fill="#5a5a5a"/></svg>
<div class="r" style="left:26.50px;top:264.00px;width:1.00px;height:15.00px;background:#555555;"></div>
<div class="t" style="left:22.30px;top:265.20px;font-size:10.5px;line-height:12.60px;color:#d8d8d8;clip-path:inset(0 48% 0 0);">A</div>
<div class="r" style="left:57.00px;top:264.00px;width:1.00px;height:15.00px;background:#555555;"></div>
<div class="t" style="left:38.75px;top:265.20px;font-size:10.5px;line-height:12.60px;color:#d8d8d8;">B</div>
<div class="r" style="left:81.00px;top:264.00px;width:1.00px;height:15.00px;background:#555555;"></div>
<div class="t" style="left:65.71px;top:265.20px;font-size:10.5px;line-height:12.60px;color:#d8d8d8;">C</div>
<div class="r" style="left:110.10px;top:264.00px;width:1.00px;height:15.00px;background:#555555;"></div>
<div class="t" style="left:92.26px;top:265.20px;font-size:10.5px;line-height:12.60px;color:#d8d8d8;">D</div>
<div class="r" style="left:141.00px;top:264.00px;width:1.00px;height:15.00px;background:#555555;"></div>
<div class="t" style="left:122.55px;top:265.20px;font-size:10.5px;line-height:12.60px;color:#d8d8d8;">E</div>
<div class="r" style="left:166.00px;top:264.00px;width:1.00px;height:15.00px;background:#555555;"></div>
<div class="t" style="left:150.79px;top:265.20px;font-size:10.5px;line-height:12.60px;color:#d8d8d8;">F</div>
<div class="r" style="left:196.00px;top:264.00px;width:1.00px;height:15.00px;background:#555555;"></div>
<div class="t" style="left:177.42px;top:265.20px;font-size:10.5px;line-height:12.60px;color:#d8d8d8;">G</div>
<div class="r" style="left:219.80px;top:264.00px;width:1.00px;height:15.00px;background:#555555;"></div>
<div class="t" style="left:204.61px;top:265.20px;font-size:10.5px;line-height:12.60px;color:#d8d8d8;">H</div>
<div class="r" style="left:249.50px;top:264.00px;width:1.00px;height:15.00px;background:#555555;"></div>
<div class="t" style="left:233.69px;top:265.20px;font-size:10.5px;line-height:12.60px;color:#d8d8d8;">I</div>
<div class="r" style="left:280.20px;top:264.00px;width:1.00px;height:15.00px;background:#555555;"></div>
<div class="t" style="left:262.73px;top:265.20px;font-size:10.5px;line-height:12.60px;color:#d8d8d8;">J</div>
<div class="r" style="left:305.10px;top:264.00px;width:1.00px;height:15.00px;background:#555555;"></div>
<div class="t" style="left:289.65px;top:265.20px;font-size:10.5px;line-height:12.60px;color:#d8d8d8;">K</div>
<div class="r" style="left:334.70px;top:264.00px;width:1.00px;height:15.00px;background:#555555;"></div>
<div class="t" style="left:317.48px;top:265.20px;font-size:10.5px;line-height:12.60px;color:#d8d8d8;">L</div>
<div class="r" style="left:359.00px;top:264.00px;width:1.00px;height:15.00px;background:#555555;"></div>
<div class="t" style="left:342.98px;top:265.20px;font-size:10.5px;line-height:12.60px;color:#d8d8d8;">M</div>
<div class="r" style="left:387.90px;top:264.00px;width:1.00px;height:15.00px;background:#555555;"></div>
<div class="t" style="left:370.16px;top:265.20px;font-size:10.5px;line-height:12.60px;color:#d8d8d8;">N</div>
<div class="r" style="left:419.00px;top:264.00px;width:1.00px;height:15.00px;background:#555555;"></div>
<div class="t" style="left:399.87px;top:265.20px;font-size:10.5px;line-height:12.60px;color:#d8d8d8;">O</div>
<div class="r" style="left:443.90px;top:264.00px;width:1.00px;height:15.00px;background:#555555;"></div>
<div class="t" style="left:428.45px;top:265.20px;font-size:10.5px;line-height:12.60px;color:#d8d8d8;">P</div>
<div class="r" style="left:474.00px;top:264.00px;width:1.00px;height:15.00px;background:#555555;"></div>
<div class="t" style="left:455.37px;top:265.20px;font-size:10.5px;line-height:12.60px;color:#d8d8d8;">Q</div>
<div class="r" style="left:497.80px;top:264.00px;width:1.00px;height:15.00px;background:#555555;"></div>
<div class="t" style="left:482.61px;top:265.20px;font-size:10.5px;line-height:12.60px;color:#d8d8d8;">R</div>
<div class="r" style="left:545.00px;top:264.00px;width:1.00px;height:15.00px;background:#555555;"></div>
<div class="t" style="left:518.40px;top:265.20px;font-size:10.5px;line-height:12.60px;color:#d8d8d8;">S</div>
<div class="r" style="left:575.80px;top:264.00px;width:1.00px;height:15.00px;background:#555555;"></div>
<div class="t" style="left:557.69px;top:265.20px;font-size:10.5px;line-height:12.60px;color:#d8d8d8;">T</div>
<div class="r" style="left:601.00px;top:264.00px;width:1.00px;height:15.00px;background:#555555;"></div>
<div class="t" style="left:585.11px;top:265.20px;font-size:10.5px;line-height:12.60px;color:#d8d8d8;">U</div>
<div class="r" style="left:631.00px;top:264.00px;width:1.00px;height:15.00px;background:#555555;"></div>
<div class="t" style="left:613.00px;top:265.20px;font-size:10.5px;line-height:12.60px;color:#d8d8d8;">V</div>
<div class="r" style="left:655.20px;top:264.00px;width:1.00px;height:15.00px;background:#555555;"></div>
<div class="t" style="left:638.64px;top:265.20px;font-size:10.5px;line-height:12.60px;color:#d8d8d8;">W</div>
<div class="r" style="left:683.70px;top:264.00px;width:1.00px;height:15.00px;background:#555555;"></div>
<div class="t" style="left:666.45px;top:265.20px;font-size:10.5px;line-height:12.60px;color:#d8d8d8;">X</div>
<div class="r" style="left:714.50px;top:264.00px;width:1.00px;height:15.00px;background:#555555;"></div>
<div class="t" style="left:696.10px;top:265.20px;font-size:10.5px;line-height:12.60px;color:#d8d8d8;">Y</div>
<div class="r" style="left:749.00px;top:264.00px;width:1.00px;height:15.00px;background:#555555;"></div>
<div class="t" style="left:729.04px;top:265.20px;font-size:10.5px;line-height:12.60px;color:#d8d8d8;">Z</div>
<div class="r" style="left:779.30px;top:264.00px;width:1.00px;height:15.00px;background:#555555;"></div>
<div class="t" style="left:757.65px;top:265.20px;font-size:10.5px;line-height:12.60px;color:#d8d8d8;">AA</div>
<div class="r" style="left:802.70px;top:264.00px;width:1.00px;height:15.00px;background:#555555;"></div>
<div class="t" style="left:784.50px;top:265.20px;font-size:10.5px;line-height:12.60px;color:#d8d8d8;">AB</div>
<div class="r" style="left:832.00px;top:264.00px;width:1.00px;height:15.00px;background:#555555;"></div>
<div class="t" style="left:810.56px;top:265.20px;font-size:10.5px;line-height:12.60px;color:#d8d8d8;">AC</div>
<div class="r" style="left:863.00px;top:264.00px;width:1.00px;height:15.00px;background:#555555;"></div>
<div class="t" style="left:840.71px;top:265.20px;font-size:10.5px;line-height:12.60px;color:#d8d8d8;">AD</div>
<div class="r" style="left:888.10px;top:264.00px;width:1.00px;height:15.00px;background:#555555;"></div>
<div class="t" style="left:869.05px;top:265.20px;font-size:10.5px;line-height:12.60px;color:#d8d8d8;">AE</div>
<div class="r" style="left:917.60px;top:264.00px;width:1.00px;height:15.00px;background:#555555;"></div>
<div class="t" style="left:896.64px;top:265.20px;font-size:10.5px;line-height:12.60px;color:#d8d8d8;">AF</div>
<div class="r" style="left:951.00px;top:264.00px;width:1.00px;height:15.00px;background:#555555;"></div>
<div class="t" style="left:927.21px;top:265.20px;font-size:10.5px;line-height:12.60px;color:#d8d8d8;">AG</div>
<div class="r" style="left:979.50px;top:264.00px;width:1.00px;height:15.00px;background:#555555;"></div>
<div class="t" style="left:958.46px;top:265.20px;font-size:10.5px;line-height:12.60px;color:#d8d8d8;">AH</div>
<div class="r" style="left:1011.00px;top:264.00px;width:1.00px;height:15.00px;background:#555555;"></div>
<div class="t" style="left:990.79px;top:265.20px;font-size:10.5px;line-height:12.60px;color:#d8d8d8;">AI</div>
<div class="r" style="left:1035.90px;top:264.00px;width:1.00px;height:15.00px;background:#555555;"></div>
<div class="t" style="left:1017.82px;top:265.20px;font-size:10.5px;line-height:12.60px;color:#d8d8d8;">AJ</div>
<div class="r" style="left:1129.70px;top:264.00px;width:1.00px;height:15.00px;background:#555555;"></div>
<div class="t" style="left:1076.30px;top:265.20px;font-size:10.5px;line-height:12.60px;color:#d8d8d8;">AK</div>
<div class="r" style="left:1130.20px;top:264.00px;width:64.70px;height:14.00px;background:#6a6a6a;"></div>
<div class="r" style="left:1130.20px;top:264.00px;width:1.00px;height:14.00px;background:#b0b0b0;"></div>
<div class="r" style="left:1193.90px;top:264.00px;width:1.00px;height:14.00px;background:#b0b0b0;"></div>
<div class="r" style="left:1130.20px;top:277.50px;width:64.70px;height:2.00px;background:#217346;"></div>
<div class="r" style="left:1194.40px;top:264.00px;width:1.00px;height:15.00px;background:#555555;"></div>
<div class="t" style="left:1156.13px;top:265.20px;font-size:10.5px;line-height:12.60px;color:#d8d8d8;">AL</div>
<div class="r" style="left:1245.90px;top:264.00px;width:1.00px;height:15.00px;background:#555555;"></div>
<div class="t" style="left:1212.77px;top:265.20px;font-size:10.5px;line-height:12.60px;color:#d8d8d8;">AM</div>
<div class="r" style="left:1303.50px;top:264.00px;width:1.00px;height:15.00px;background:#555555;"></div>
<div class="t" style="left:1268.66px;top:265.20px;font-size:10.5px;line-height:12.60px;color:#d8d8d8;">AN</div>
<div class="r" style="left:1307.20px;top:264.00px;width:1.00px;height:15.00px;background:#555555;"></div>
<div class="r" style="left:1332.90px;top:264.00px;width:1.00px;height:15.00px;background:#555555;"></div>
<div class="t" style="left:1313.26px;top:265.20px;font-size:10.5px;line-height:12.60px;color:#d8d8d8;">AU</div>
<div class="r" style="left:1343.80px;top:264.00px;width:1.00px;height:15.00px;background:#555555;"></div>
<div class="t" style="left:1336.40px;top:265.20px;font-size:10.5px;line-height:12.60px;color:#d8d8d8;clip-path:inset(0 45% 0 0);">A</div>
<div class="r" style="left:0.00px;top:296.20px;width:21.50px;height:1.00px;background:#555555;"></div>
<div class="t" style="left:8.08px;top:281.85px;font-size:10.5px;line-height:12.60px;color:#d8d8d8;">1</div>
<div class="r" style="left:0.00px;top:312.70px;width:21.50px;height:1.00px;background:#555555;"></div>
<div class="t" style="left:8.08px;top:298.95px;font-size:10.5px;line-height:12.60px;color:#d8d8d8;">2</div>
<div class="r" style="left:0.00px;top:326.10px;width:21.50px;height:1.00px;background:#555555;"></div>
<div class="t" style="left:8.08px;top:313.90px;font-size:10.5px;line-height:12.60px;color:#d8d8d8;">3</div>
<div class="r" style="left:0.00px;top:342.80px;width:21.50px;height:1.00px;background:#555555;"></div>
<div class="t" style="left:8.08px;top:328.95px;font-size:10.5px;line-height:12.60px;color:#d8d8d8;">4</div>
<div class="r" style="left:0.00px;top:359.60px;width:21.50px;height:1.00px;background:#555555;"></div>
<div class="t" style="left:8.08px;top:345.70px;font-size:10.5px;line-height:12.60px;color:#d8d8d8;">5</div>
<div class="r" style="left:0.00px;top:376.00px;width:21.50px;height:1.00px;background:#555555;"></div>
<div class="t" style="left:8.08px;top:362.30px;font-size:10.5px;line-height:12.60px;color:#d8d8d8;">6</div>
<div class="r" style="left:0.00px;top:393.00px;width:21.50px;height:1.00px;background:#555555;"></div>
<div class="t" style="left:8.08px;top:379.00px;font-size:10.5px;line-height:12.60px;color:#d8d8d8;">7</div>
<div class="r" style="left:0.00px;top:409.90px;width:21.50px;height:1.00px;background:#555555;"></div>
<div class="t" style="left:8.08px;top:395.95px;font-size:10.5px;line-height:12.60px;color:#d8d8d8;">8</div>
<div class="r" style="left:0.00px;top:426.90px;width:21.50px;height:1.00px;background:#555555;"></div>
<div class="t" style="left:8.08px;top:412.90px;font-size:10.5px;line-height:12.60px;color:#d8d8d8;">9</div>
<div class="r" style="left:0.00px;top:443.50px;width:21.50px;height:1.00px;background:#555555;"></div>
<div class="t" style="left:5.16px;top:429.70px;font-size:10.5px;line-height:12.60px;color:#d8d8d8;">10</div>
<div class="r" style="left:0.00px;top:457.30px;width:21.50px;height:1.00px;background:#555555;"></div>
<div class="t" style="left:5.55px;top:444.90px;font-size:10.5px;line-height:12.60px;color:#d8d8d8;">11</div>
<div class="r" style="left:0.00px;top:474.00px;width:21.50px;height:1.00px;background:#555555;"></div>
<div class="t" style="left:5.16px;top:460.15px;font-size:10.5px;line-height:12.60px;color:#d8d8d8;">12</div>
<div class="r" style="left:0.00px;top:490.90px;width:21.50px;height:1.00px;background:#555555;"></div>
<div class="t" style="left:5.16px;top:476.95px;font-size:10.5px;line-height:12.60px;color:#d8d8d8;">13</div>
<div class="r" style="left:0.00px;top:507.20px;width:21.50px;height:1.00px;background:#555555;"></div>
<div class="t" style="left:5.16px;top:493.55px;font-size:10.5px;line-height:12.60px;color:#d8d8d8;">14</div>
<div class="r" style="left:0.00px;top:524.00px;width:21.50px;height:1.00px;background:#555555;"></div>
<div class="t" style="left:5.16px;top:510.10px;font-size:10.5px;line-height:12.60px;color:#d8d8d8;">15</div>
<div class="r" style="left:0.00px;top:541.00px;width:21.50px;height:1.00px;background:#555555;"></div>
<div class="t" style="left:5.16px;top:527.00px;font-size:10.5px;line-height:12.60px;color:#d8d8d8;">16</div>
<div class="r" style="left:0.00px;top:558.10px;width:21.50px;height:1.00px;background:#555555;"></div>
<div class="t" style="left:5.16px;top:544.05px;font-size:10.5px;line-height:12.60px;color:#d8d8d8;">17</div>
<div class="r" style="left:0.00px;top:574.70px;width:21.50px;height:1.00px;background:#555555;"></div>
<div class="t" style="left:5.16px;top:560.90px;font-size:10.5px;line-height:12.60px;color:#d8d8d8;">18</div>
<div class="r" style="left:0.00px;top:592.00px;width:21.50px;height:1.00px;background:#555555;"></div>
<div class="t" style="left:5.16px;top:577.85px;font-size:10.5px;line-height:12.60px;color:#d8d8d8;">19</div>
<div class="r" style="left:0.00px;top:608.90px;width:21.50px;height:1.00px;background:#555555;"></div>
<div class="t" style="left:5.16px;top:594.95px;font-size:10.5px;line-height:12.60px;color:#d8d8d8;">20</div>
<div class="r" style="left:0.00px;top:625.70px;width:21.50px;height:1.00px;background:#555555;"></div>
<div class="t" style="left:5.16px;top:611.80px;font-size:10.5px;line-height:12.60px;color:#d8d8d8;">21</div>
<div class="r" style="left:0.00px;top:641.90px;width:21.50px;height:1.00px;background:#555555;"></div>
<div class="t" style="left:5.16px;top:628.30px;font-size:10.5px;line-height:12.60px;color:#d8d8d8;">22</div>
<div class="r" style="left:0.00px;top:658.80px;width:21.50px;height:1.00px;background:#555555;"></div>
<div class="t" style="left:5.16px;top:644.85px;font-size:10.5px;line-height:12.60px;color:#d8d8d8;">23</div>
<div class="r" style="left:0.00px;top:675.70px;width:21.50px;height:1.00px;background:#555555;"></div>
<div class="t" style="left:5.16px;top:661.75px;font-size:10.5px;line-height:12.60px;color:#d8d8d8;">24</div>
<div class="r" style="left:0.00px;top:692.90px;width:21.50px;height:1.00px;background:#555555;"></div>
<div class="t" style="left:5.16px;top:678.80px;font-size:10.5px;line-height:12.60px;color:#d8d8d8;">25</div>
<div class="r" style="left:0.00px;top:710.00px;width:21.50px;height:1.00px;background:#555555;"></div>
<div class="t" style="left:5.16px;top:695.95px;font-size:10.5px;line-height:12.60px;color:#d8d8d8;">26</div>
<div class="r" style="left:0.00px;top:726.50px;width:21.50px;height:1.00px;background:#555555;"></div>
<div class="t" style="left:5.16px;top:710.00px;font-size:10.5px;line-height:12.60px;color:#d8d8d8;">27</div>
<div class="r" style="left:27.00px;top:279.00px;width:169.50px;height:34.20px;background:#adb9ca;"></div>
<div class="r" style="left:196.50px;top:279.00px;width:191.90px;height:17.70px;background:#adb9ca;"></div>
<div class="r" style="left:196.50px;top:296.70px;width:191.90px;height:16.50px;background:#f8cbad;"></div>
<div class="r" style="left:444.40px;top:279.00px;width:53.90px;height:17.70px;background:#adb9ca;"></div>
<div class="r" style="left:444.40px;top:296.70px;width:53.90px;height:16.50px;background:#f8cbad;"></div>
<div class="r" style="left:655.70px;top:279.00px;width:59.30px;height:17.70px;background:#adb9ca;"></div>
<div class="r" style="left:655.70px;top:296.70px;width:59.30px;height:16.50px;background:#f8cbad;"></div>
<div class="r" style="left:863.50px;top:279.00px;width:54.60px;height:17.70px;background:#adb9ca;"></div>
<div class="r" style="left:863.50px;top:296.70px;width:54.60px;height:16.50px;background:#f8cbad;"></div>
<div class="r" style="left:1011.50px;top:279.00px;width:24.90px;height:34.20px;background:#adb9ca;"></div>
<div class="r" style="left:547.00px;top:281.00px;width:52.50px;height:30.20px;background:#ff6600;"></div>
<div class="r" style="left:751.00px;top:281.00px;width:50.20px;height:30.20px;background:#ff6600;"></div>
<div class="r" style="left:953.00px;top:281.00px;width:56.50px;height:30.20px;background:#ff6600;"></div>
<div class="r" style="left:1130.20px;top:279.00px;width:175.30px;height:34.20px;background:#00b0f0;"></div>
<div class="r" style="left:1036.40px;top:279.00px;width:94.60px;height:33.60px;background:#f0f0f0;"></div>
<div class="r" style="left:1037.40px;top:311.40px;width:93.60px;height:1.20px;background:#707070;"></div>
<div class="r" style="left:1130.00px;top:279.00px;width:1.20px;height:33.60px;background:#808080;"></div>
<div class="t" style="left:1045.30px;top:289.00px;font-size:12.5px;line-height:15.00px;color:#000;letter-spacing:0.296px;">Refresh Data</div>
<div class="r" style="left:26.00px;top:312.00px;width:1011.00px;height:2.00px;background:#000;"></div>
<div class="r" style="left:26.00px;top:279.00px;width:2.00px;height:35.00px;background:#000;"></div>
<div class="r" style="left:195.00px;top:279.00px;width:2.00px;height:35.00px;background:#000;"></div>
<div class="r" style="left:387.00px;top:279.00px;width:2.00px;height:35.00px;background:#000;"></div>
<div class="r" style="left:443.00px;top:279.00px;width:2.00px;height:35.00px;background:#000;"></div>
<div class="r" style="left:497.00px;top:279.00px;width:2.00px;height:35.00px;background:#000;"></div>
<div class="r" style="left:544.00px;top:279.00px;width:2.00px;height:35.00px;background:#000;"></div>
<div class="r" style="left:600.00px;top:279.00px;width:2.00px;height:35.00px;background:#000;"></div>
<div class="r" style="left:654.00px;top:279.00px;width:2.00px;height:35.00px;background:#000;"></div>
<div class="r" style="left:714.00px;top:279.00px;width:2.00px;height:35.00px;background:#000;"></div>
<div class="r" style="left:748.00px;top:279.00px;width:2.00px;height:35.00px;background:#000;"></div>
<div class="r" style="left:802.00px;top:279.00px;width:2.00px;height:35.00px;background:#000;"></div>
<div class="r" style="left:862.00px;top:279.00px;width:2.00px;height:35.00px;background:#000;"></div>
<div class="r" style="left:917.00px;top:279.00px;width:2.00px;height:35.00px;background:#000;"></div>
<div class="r" style="left:950.00px;top:279.00px;width:2.00px;height:35.00px;background:#000;"></div>
<div class="r" style="left:1010.00px;top:279.00px;width:2.00px;height:35.00px;background:#000;"></div>
<div class="r" style="left:1035.00px;top:279.00px;width:2.00px;height:35.00px;background:#000;"></div>
<div class="r" style="left:195.00px;top:295.00px;width:194.00px;height:2.00px;background:#000;"></div>
<div class="r" style="left:443.00px;top:295.00px;width:56.00px;height:2.00px;background:#000;"></div>
<div class="r" style="left:654.00px;top:295.00px;width:62.00px;height:2.00px;background:#000;"></div>
<div class="r" style="left:862.00px;top:295.00px;width:57.00px;height:2.00px;background:#000;"></div>
<div class="r" style="left:1304.00px;top:279.00px;width:2.00px;height:35.00px;background:#000;"></div>
<div class="r" style="left:1129.00px;top:312.00px;width:177.00px;height:2.00px;background:#000;"></div>
<div class="t" style="left:32.60px;top:289.22px;font-size:11.8px;line-height:14.16px;color:#000;letter-spacing:0.032px;">We are currently in:   Week 05</div>
<div class="t" style="left:206.00px;top:280.92px;font-size:11.8px;line-height:14.16px;color:#000;letter-spacing:0.029px;">Planned Load For Current Week:</div>
<div class="t" style="left:227.00px;top:297.92px;font-size:11.8px;line-height:14.16px;color:#000;letter-spacing:-0.074px;">This Weeks Load So Far:</div>
<div class="t" style="left:403.27px;top:289.32px;font-size:11.8px;line-height:14.16px;color:#000;">Load</div>
<div class="t" style="left:459.11px;top:282.35px;font-size:11px;line-height:13.20px;color:#000;">1780</div>
<div class="t" style="left:459.11px;top:298.85px;font-size:11px;line-height:13.20px;color:#000;">1734</div>
<div class="t" style="left:510.69px;top:289.68px;font-size:11.2px;line-height:13.44px;color:#000;">97%</div>
<div class="t" style="left:621.13px;top:289.68px;font-size:11.2px;line-height:13.44px;color:#000;">TD</div>
<div class="t" style="left:673.11px;top:282.35px;font-size:11px;line-height:13.20px;color:#000;">7473</div>
<div class="t" style="left:670.46px;top:298.85px;font-size:11px;line-height:13.20px;color:#000;">11329</div>
<div class="t" style="left:718.95px;top:290.86px;font-size:10.4px;line-height:12.48px;color:#000;">152%</div>
<div class="t" style="left:821.53px;top:289.68px;font-size:11.2px;line-height:13.44px;color:#000;">HSR</div>
<div class="t" style="left:881.62px;top:282.35px;font-size:11px;line-height:13.20px;color:#000;">160</div>
<div class="t" style="left:878.97px;top:298.85px;font-size:11px;line-height:13.20px;color:#000;">1173</div>
<div class="t" style="left:921.50px;top:290.86px;font-size:10.4px;line-height:12.48px;color:#000;">733%</div>
<div class="t" style="left:1193.00px;top:281.64px;font-size:10.6px;line-height:12.72px;color:#000;font-weight:bold;letter-spacing:-0.018px;">Athlete 10</div>
<div class="t" style="left:1140.00px;top:298.64px;font-size:10.6px;line-height:12.72px;color:#000;font-weight:bold;letter-spacing:-0.117px;">Planned Load Weekly Summary</div>
<div class="r" style="left:27.00px;top:326.60px;width:1009.40px;height:16.70px;background:#00b0f0;"></div>
<div class="r" style="left:27.00px;top:427.40px;width:1009.40px;height:16.60px;background:#92d050;"></div>
<div class="t" style="left:510.99px;top:329.37px;font-size:10.8px;line-height:12.96px;color:#000;font-weight:bold;letter-spacing:-0.268px;">Week 06</div>
<div class="t" style="left:78.53px;top:347.04px;font-size:10.1px;line-height:12.12px;color:#000;font-weight:bold;letter-spacing:-0.343px;">Monday</div>
<div class="t" style="left:68.75px;top:363.64px;font-size:10.1px;line-height:12.12px;color:#000;font-weight:bold;letter-spacing:0.606px;">18/09/2017</div>
<div class="t" style="left:31.26px;top:380.34px;font-size:10.1px;line-height:12.12px;color:#000;font-weight:bold;letter-spacing:-0.345px;">Mins</div>
<div class="t" style="left:59.58px;top:380.34px;font-size:10.1px;line-height:12.12px;color:#000;font-weight:bold;letter-spacing:-0.467px;">RPE</div>
<div class="t" style="left:84.53px;top:380.34px;font-size:10.1px;line-height:12.12px;color:#000;font-weight:bold;letter-spacing:-0.362px;">Load</div>
<div class="t" style="left:119.62px;top:380.34px;font-size:10.1px;line-height:12.12px;color:#000;font-weight:bold;letter-spacing:-0.606px;">TD</div>
<div class="t" style="left:143.82px;top:380.34px;font-size:10.1px;line-height:12.12px;color:#000;font-weight:bold;letter-spacing:-0.480px;">HSR</div>
<div class="t" style="left:36.35px;top:397.29px;font-size:10.1px;line-height:12.12px;color:#000;font-weight:bold;letter-spacing:0.565px;">55</div>
<div class="t" style="left:66.55px;top:397.29px;font-size:10.1px;line-height:12.12px;color:#000;font-weight:bold;">5</div>
<div class="t" style="left:87.20px;top:397.29px;font-size:10.1px;line-height:12.12px;color:#000;font-weight:bold;letter-spacing:0.424px;">275</div>
<div class="t" style="left:114.25px;top:397.29px;font-size:10.1px;line-height:12.12px;color:#000;font-weight:bold;letter-spacing:0.377px;">2565</div>
<div class="t" style="left:145.15px;top:397.29px;font-size:10.1px;line-height:12.12px;color:#000;font-weight:bold;letter-spacing:0.424px;">350</div>
<div class="t" style="left:93.10px;top:414.24px;font-size:10.1px;line-height:12.12px;color:#000;font-weight:bold;">0</div>
<div class="t" style="left:31.20px;top:431.04px;font-size:10.1px;line-height:12.12px;color:#000;font-weight:bold;letter-spacing:-0.344px;">Total</div>
<div class="t" style="left:87.20px;top:431.04px;font-size:10.1px;line-height:12.12px;color:#000;font-weight:bold;letter-spacing:0.424px;">275</div>
<div class="t" style="left:114.25px;top:431.04px;font-size:10.1px;line-height:12.12px;color:#000;font-weight:bold;letter-spacing:0.377px;">2565</div>
<div class="t" style="left:145.15px;top:431.04px;font-size:10.1px;line-height:12.12px;color:#000;font-weight:bold;letter-spacing:0.424px;">350</div>
<div class="t" style="left:216.84px;top:347.04px;font-size:10.1px;line-height:12.12px;color:#000;font-weight:bold;letter-spacing:-0.302px;">Tuesday</div>
<div class="t" style="left:208.05px;top:363.64px;font-size:10.1px;line-height:12.12px;color:#000;font-weight:bold;letter-spacing:0.606px;">19/09/2017</div>
<div class="t" style="left:170.51px;top:380.34px;font-size:10.1px;line-height:12.12px;color:#000;font-weight:bold;letter-spacing:-0.345px;">Mins</div>
<div class="t" style="left:198.48px;top:380.34px;font-size:10.1px;line-height:12.12px;color:#000;font-weight:bold;letter-spacing:-0.467px;">RPE</div>
<div class="t" style="left:223.63px;top:380.34px;font-size:10.1px;line-height:12.12px;color:#000;font-weight:bold;letter-spacing:-0.362px;">Load</div>
<div class="t" style="left:258.92px;top:380.34px;font-size:10.1px;line-height:12.12px;color:#000;font-weight:bold;letter-spacing:-0.606px;">TD</div>
<div class="t" style="left:282.97px;top:380.34px;font-size:10.1px;line-height:12.12px;color:#000;font-weight:bold;letter-spacing:-0.480px;">HSR</div>
<div class="t" style="left:175.60px;top:397.29px;font-size:10.1px;line-height:12.12px;color:#000;font-weight:bold;letter-spacing:0.565px;">50</div>
<div class="t" style="left:205.45px;top:397.29px;font-size:10.1px;line-height:12.12px;color:#000;font-weight:bold;">7</div>
<div class="t" style="left:226.30px;top:397.29px;font-size:10.1px;line-height:12.12px;color:#000;font-weight:bold;letter-spacing:0.424px;">350</div>
<div class="t" style="left:253.55px;top:397.29px;font-size:10.1px;line-height:12.12px;color:#000;font-weight:bold;letter-spacing:0.377px;">2044</div>
<div class="t" style="left:284.30px;top:397.29px;font-size:10.1px;line-height:12.12px;color:#000;font-weight:bold;letter-spacing:0.424px;">250</div>
<div class="t" style="left:232.20px;top:414.24px;font-size:10.1px;line-height:12.12px;color:#000;font-weight:bold;">0</div>
<div class="t" style="left:170.70px;top:431.04px;font-size:10.1px;line-height:12.12px;color:#000;font-weight:bold;letter-spacing:-0.344px;">Total</div>
<div class="t" style="left:226.30px;top:431.04px;font-size:10.1px;line-height:12.12px;color:#000;font-weight:bold;letter-spacing:0.424px;">350</div>
<div class="t" style="left:253.55px;top:431.04px;font-size:10.1px;line-height:12.12px;color:#000;font-weight:bold;letter-spacing:0.377px;">2044</div>
<div class="t" style="left:284.30px;top:431.04px;font-size:10.1px;line-height:12.12px;color:#000;font-weight:bold;letter-spacing:0.424px;">250</div>
<div class="t" style="left:348.29px;top:347.04px;font-size:10.1px;line-height:12.12px;color:#000;font-weight:bold;letter-spacing:-0.315px;">Wednesday</div>
<div class="t" style="left:347.00px;top:363.64px;font-size:10.1px;line-height:12.12px;color:#000;font-weight:bold;letter-spacing:0.606px;">20/09/2017</div>
<div class="t" style="left:309.41px;top:380.34px;font-size:10.1px;line-height:12.12px;color:#000;font-weight:bold;letter-spacing:-0.345px;">Mins</div>
<div class="t" style="left:337.43px;top:380.34px;font-size:10.1px;line-height:12.12px;color:#000;font-weight:bold;letter-spacing:-0.467px;">RPE</div>
<div class="t" style="left:362.43px;top:380.34px;font-size:10.1px;line-height:12.12px;color:#000;font-weight:bold;letter-spacing:-0.362px;">Load</div>
<div class="t" style="left:397.52px;top:380.34px;font-size:10.1px;line-height:12.12px;color:#000;font-weight:bold;letter-spacing:-0.606px;">TD</div>
<div class="t" style="left:421.77px;top:380.34px;font-size:10.1px;line-height:12.12px;color:#000;font-weight:bold;letter-spacing:-0.480px;">HSR</div>
<div class="t" style="left:314.50px;top:397.29px;font-size:10.1px;line-height:12.12px;color:#000;font-weight:bold;letter-spacing:0.565px;">57</div>
<div class="t" style="left:344.40px;top:397.29px;font-size:10.1px;line-height:12.12px;color:#000;font-weight:bold;">5</div>
<div class="t" style="left:365.10px;top:397.29px;font-size:10.1px;line-height:12.12px;color:#000;font-weight:bold;letter-spacing:0.424px;">285</div>
<div class="t" style="left:392.15px;top:397.29px;font-size:10.1px;line-height:12.12px;color:#000;font-weight:bold;letter-spacing:0.377px;">2929</div>
<div class="t" style="left:423.10px;top:397.29px;font-size:10.1px;line-height:12.12px;color:#000;font-weight:bold;letter-spacing:0.424px;">780</div>
<div class="t" style="left:371.00px;top:414.24px;font-size:10.1px;line-height:12.12px;color:#000;font-weight:bold;">0</div>
<div class="t" style="left:309.80px;top:431.04px;font-size:10.1px;line-height:12.12px;color:#000;font-weight:bold;letter-spacing:-0.344px;">Total</div>
<div class="t" style="left:365.10px;top:431.04px;font-size:10.1px;line-height:12.12px;color:#000;font-weight:bold;letter-spacing:0.424px;">285</div>
<div class="t" style="left:392.15px;top:431.04px;font-size:10.1px;line-height:12.12px;color:#000;font-weight:bold;letter-spacing:0.377px;">2929</div>
<div class="t" style="left:423.10px;top:431.04px;font-size:10.1px;line-height:12.12px;color:#000;font-weight:bold;letter-spacing:0.424px;">780</div>
<div class="t" style="left:501.24px;top:347.04px;font-size:10.1px;line-height:12.12px;color:#000;font-weight:bold;letter-spacing:-0.292px;">Thursday</div>
<div class="t" style="left:494.95px;top:363.64px;font-size:10.1px;line-height:12.12px;color:#000;font-weight:bold;letter-spacing:0.606px;">21/09/2017</div>
<div class="t" style="left:448.46px;top:380.34px;font-size:10.1px;line-height:12.12px;color:#000;font-weight:bold;letter-spacing:-0.345px;">Mins</div>
<div class="t" style="left:476.48px;top:380.34px;font-size:10.1px;line-height:12.12px;color:#000;font-weight:bold;letter-spacing:-0.467px;">RPE</div>
<div class="t" style="left:510.38px;top:380.34px;font-size:10.1px;line-height:12.12px;color:#000;font-weight:bold;letter-spacing:-0.362px;">Load</div>
<div class="t" style="left:554.47px;top:380.34px;font-size:10.1px;line-height:12.12px;color:#000;font-weight:bold;letter-spacing:-0.606px;">TD</div>
<div class="t" style="left:578.72px;top:380.34px;font-size:10.1px;line-height:12.12px;color:#000;font-weight:bold;letter-spacing:-0.480px;">HSR</div>
<div class="t" style="left:518.95px;top:397.29px;font-size:10.1px;line-height:12.12px;color:#000;font-weight:bold;">0</div>
<div class="t" style="left:518.95px;top:414.24px;font-size:10.1px;line-height:12.12px;color:#000;font-weight:bold;">0</div>
<div class="t" style="left:448.60px;top:431.04px;font-size:10.1px;line-height:12.12px;color:#000;font-weight:bold;letter-spacing:-0.344px;">Total</div>
<div class="t" style="left:518.95px;top:431.04px;font-size:10.1px;line-height:12.12px;color:#000;font-weight:bold;">0</div>
<div class="t" style="left:557.95px;top:431.04px;font-size:10.1px;line-height:12.12px;color:#000;font-weight:bold;">0</div>
<div class="t" style="left:585.95px;top:431.04px;font-size:10.1px;line-height:12.12px;color:#000;font-weight:bold;">0</div>
<div class="t" style="left:661.03px;top:347.04px;font-size:10.1px;line-height:12.12px;color:#000;font-weight:bold;letter-spacing:-0.273px;">Friday</div>
<div class="t" style="left:647.50px;top:363.64px;font-size:10.1px;line-height:12.12px;color:#000;font-weight:bold;letter-spacing:0.606px;">22/09/2017</div>
<div class="t" style="left:605.51px;top:380.34px;font-size:10.1px;line-height:12.12px;color:#000;font-weight:bold;letter-spacing:-0.345px;">Mins</div>
<div class="t" style="left:633.68px;top:380.34px;font-size:10.1px;line-height:12.12px;color:#000;font-weight:bold;letter-spacing:-0.467px;">RPE</div>
<div class="t" style="left:658.43px;top:380.34px;font-size:10.1px;line-height:12.12px;color:#000;font-weight:bold;letter-spacing:-0.362px;">Load</div>
<div class="t" style="left:693.17px;top:380.34px;font-size:10.1px;line-height:12.12px;color:#000;font-weight:bold;letter-spacing:-0.606px;">TD</div>
<div class="t" style="left:722.07px;top:380.34px;font-size:10.1px;line-height:12.12px;color:#000;font-weight:bold;letter-spacing:-0.480px;">HSR</div>
<div class="t" style="left:610.60px;top:397.29px;font-size:10.1px;line-height:12.12px;color:#000;font-weight:bold;letter-spacing:0.565px;">55</div>
<div class="t" style="left:640.65px;top:397.29px;font-size:10.1px;line-height:12.12px;color:#000;font-weight:bold;">7</div>
<div class="t" style="left:661.10px;top:397.29px;font-size:10.1px;line-height:12.12px;color:#000;font-weight:bold;letter-spacing:0.424px;">385</div>
<div class="t" style="left:687.80px;top:397.29px;font-size:10.1px;line-height:12.12px;color:#000;font-weight:bold;letter-spacing:0.377px;">2300</div>
<div class="t" style="left:723.40px;top:397.29px;font-size:10.1px;line-height:12.12px;color:#000;font-weight:bold;letter-spacing:0.424px;">150</div>
<div class="t" style="left:667.00px;top:414.24px;font-size:10.1px;line-height:12.12px;color:#000;font-weight:bold;">0</div>
<div class="t" style="left:605.70px;top:431.04px;font-size:10.1px;line-height:12.12px;color:#000;font-weight:bold;letter-spacing:-0.344px;">Total</div>
<div class="t" style="left:661.10px;top:431.04px;font-size:10.1px;line-height:12.12px;color:#000;font-weight:bold;letter-spacing:0.424px;">385</div>
<div class="t" style="left:687.80px;top:431.04px;font-size:10.1px;line-height:12.12px;color:#000;font-weight:bold;letter-spacing:0.377px;">2300</div>
<div class="t" style="left:723.40px;top:431.04px;font-size:10.1px;line-height:12.12px;color:#000;font-weight:bold;letter-spacing:0.424px;">150</div>
<div class="t" style="left:798.41px;top:347.04px;font-size:10.1px;line-height:12.12px;color:#000;font-weight:bold;letter-spacing:-0.278px;">Saturday</div>
<div class="t" style="left:791.05px;top:363.64px;font-size:10.1px;line-height:12.12px;color:#000;font-weight:bold;letter-spacing:0.606px;">23/09/2017</div>
<div class="t" style="left:753.66px;top:380.34px;font-size:10.1px;line-height:12.12px;color:#000;font-weight:bold;letter-spacing:-0.345px;">Mins</div>
<div class="t" style="left:781.58px;top:380.34px;font-size:10.1px;line-height:12.12px;color:#000;font-weight:bold;letter-spacing:-0.467px;">RPE</div>
<div class="t" style="left:806.33px;top:380.34px;font-size:10.1px;line-height:12.12px;color:#000;font-weight:bold;letter-spacing:-0.362px;">Load</div>
<div class="t" style="left:841.57px;top:380.34px;font-size:10.1px;line-height:12.12px;color:#000;font-weight:bold;letter-spacing:-0.606px;">TD</div>
<div class="t" style="left:865.87px;top:380.34px;font-size:10.1px;line-height:12.12px;color:#000;font-weight:bold;letter-spacing:-0.480px;">HSR</div>
<div class="t" style="left:758.75px;top:397.29px;font-size:10.1px;line-height:12.12px;color:#000;font-weight:bold;letter-spacing:0.565px;">46</div>
<div class="t" style="left:788.55px;top:397.29px;font-size:10.1px;line-height:12.12px;color:#000;font-weight:bold;">6</div>
<div class="t" style="left:809.00px;top:397.29px;font-size:10.1px;line-height:12.12px;color:#000;font-weight:bold;letter-spacing:0.424px;">276</div>
<div class="t" style="left:836.20px;top:397.29px;font-size:10.1px;line-height:12.12px;color:#000;font-weight:bold;letter-spacing:0.377px;">1554</div>
<div class="t" style="left:867.20px;top:397.29px;font-size:10.1px;line-height:12.12px;color:#000;font-weight:bold;letter-spacing:0.424px;">720</div>
<div class="t" style="left:814.90px;top:414.24px;font-size:10.1px;line-height:12.12px;color:#000;font-weight:bold;">0</div>
<div class="t" style="left:753.70px;top:431.04px;font-size:10.1px;line-height:12.12px;color:#000;font-weight:bold;letter-spacing:-0.344px;">Total</div>
<div class="t" style="left:809.00px;top:431.04px;font-size:10.1px;line-height:12.12px;color:#000;font-weight:bold;letter-spacing:0.424px;">276</div>
<div class="t" style="left:836.20px;top:431.04px;font-size:10.1px;line-height:12.12px;color:#000;font-weight:bold;letter-spacing:0.377px;">1554</div>
<div class="t" style="left:867.20px;top:431.04px;font-size:10.1px;line-height:12.12px;color:#000;font-weight:bold;letter-spacing:0.424px;">720</div>
<div class="t" style="left:945.08px;top:347.04px;font-size:10.1px;line-height:12.12px;color:#000;font-weight:bold;letter-spacing:-0.328px;">Sunday</div>
<div class="t" style="left:934.50px;top:363.64px;font-size:10.1px;line-height:12.12px;color:#000;font-weight:bold;letter-spacing:0.606px;">24/09/2017</div>
<div class="t" style="left:892.36px;top:380.34px;font-size:10.1px;line-height:12.12px;color:#000;font-weight:bold;letter-spacing:-0.345px;">Mins</div>
<div class="t" style="left:924.88px;top:380.34px;font-size:10.1px;line-height:12.12px;color:#000;font-weight:bold;letter-spacing:-0.467px;">RPE</div>
<div class="t" style="left:954.23px;top:380.34px;font-size:10.1px;line-height:12.12px;color:#000;font-weight:bold;letter-spacing:-0.362px;">Load</div>
<div class="t" style="left:989.32px;top:380.34px;font-size:10.1px;line-height:12.12px;color:#000;font-weight:bold;letter-spacing:-0.606px;">TD</div>
<div class="t" style="left:1013.77px;top:380.34px;font-size:10.1px;line-height:12.12px;color:#000;font-weight:bold;letter-spacing:-0.480px;">HSR</div>
<div class="t" style="left:962.80px;top:397.29px;font-size:10.1px;line-height:12.12px;color:#000;font-weight:bold;">0</div>
<div class="t" style="left:962.80px;top:414.24px;font-size:10.1px;line-height:12.12px;color:#000;font-weight:bold;">0</div>
<div class="t" style="left:892.80px;top:431.04px;font-size:10.1px;line-height:12.12px;color:#000;font-weight:bold;letter-spacing:-0.344px;">Total</div>
<div class="t" style="left:962.80px;top:431.04px;font-size:10.1px;line-height:12.12px;color:#000;font-weight:bold;">0</div>
<div class="t" style="left:992.80px;top:431.04px;font-size:10.1px;line-height:12.12px;color:#000;font-weight:bold;">0</div>
<div class="t" style="left:1021.00px;top:431.04px;font-size:10.1px;line-height:12.12px;color:#000;font-weight:bold;">0</div>
<div class="r" style="left:26.00px;top:325.00px;width:1011.00px;height:2.00px;background:#000;"></div>
<div class="r" style="left:26.00px;top:342.00px;width:1011.00px;height:2.00px;background:#000;"></div>
<div class="r" style="left:26.00px;top:426.00px;width:1011.00px;height:2.00px;background:#000;"></div>
<div class="r" style="left:26.00px;top:443.00px;width:1011.00px;height:2.00px;background:#000;"></div>
<div class="r" style="left:26.00px;top:325.00px;width:2.00px;height:120.00px;background:#000;"></div>
<div class="r" style="left:1035.00px;top:325.00px;width:2.00px;height:120.00px;background:#000;"></div>
<div class="r" style="left:165.00px;top:342.00px;width:2.00px;height:103.00px;background:#000;"></div>
<div class="r" style="left:304.00px;top:342.00px;width:2.00px;height:103.00px;background:#000;"></div>
<div class="r" style="left:443.00px;top:342.00px;width:2.00px;height:103.00px;background:#000;"></div>
<div class="r" style="left:600.00px;top:342.00px;width:2.00px;height:86.00px;background:#000;"></div>
<div class="r" style="left:748.00px;top:342.00px;width:2.00px;height:103.00px;background:#000;"></div>
<div class="r" style="left:887.00px;top:342.00px;width:2.00px;height:86.00px;background:#000;"></div>
<div class="r" style="left:1130.20px;top:326.60px;width:175.30px;height:16.70px;background:#a6a6a6;"></div>
<div class="r" style="left:1130.20px;top:343.30px;width:64.70px;height:16.80px;background:#f8cbad;"></div>
<div class="r" style="left:1194.90px;top:343.30px;width:51.50px;height:16.80px;background:#bdd7ee;"></div>
<div class="r" style="left:1246.40px;top:343.30px;width:59.10px;height:16.80px;background:#c6e0b4;"></div>
<div class="r" style="left:1130.20px;top:360.10px;width:175.30px;height:33.40px;background:#a6a6a6;"></div>
<div class="r" style="left:1130.20px;top:393.50px;width:175.30px;height:16.90px;background:#ffff00;"></div>
<div class="r" style="left:1130.20px;top:410.40px;width:175.30px;height:17.00px;background:#a6a6a6;"></div>
<div class="r" style="left:1130.20px;top:427.40px;width:175.30px;height:16.60px;background:#92d050;"></div>
<div class="r" style="left:1129.00px;top:325.00px;width:177.00px;height:2.00px;background:#000;"></div>
<div class="r" style="left:1129.00px;top:342.00px;width:177.00px;height:2.00px;background:#000;"></div>
<div class="r" style="left:1129.00px;top:359.00px;width:177.00px;height:2.00px;background:#000;"></div>
<div class="r" style="left:1129.00px;top:392.00px;width:177.00px;height:2.00px;background:#000;"></div>
<div class="r" style="left:1129.00px;top:409.00px;width:177.00px;height:2.00px;background:#000;"></div>
<div class="r" style="left:1129.00px;top:426.00px;width:177.00px;height:2.00px;background:#000;"></div>
<div class="r" style="left:1129.00px;top:443.00px;width:177.00px;height:2.00px;background:#000;"></div>
<div class="r" style="left:1129.00px;top:325.00px;width:2.00px;height:120.00px;background:#000;"></div>
<div class="r" style="left:1304.00px;top:325.00px;width:2.00px;height:120.00px;background:#000;"></div>
<div class="r" style="left:1193.00px;top:342.00px;width:2.00px;height:52.00px;background:#000;"></div>
<div class="r" style="left:1193.00px;top:409.00px;width:2.00px;height:36.00px;background:#000;"></div>
<div class="r" style="left:1245.00px;top:342.00px;width:2.00px;height:52.00px;background:#000;"></div>
<div class="r" style="left:1245.00px;top:409.00px;width:2.00px;height:36.00px;background:#000;"></div>
<div class="t" style="left:1168.95px;top:327.69px;font-size:11.6px;line-height:13.92px;color:#000;">Athlete 10Week 06</div>
<div class="t" style="left:1137.12px;top:345.24px;font-size:11.6px;line-height:13.92px;color:#000;letter-spacing:-0.297px;">Total Load</div>
<div class="t" style="left:1149.87px;top:371.46px;font-size:11.4px;line-height:13.68px;color:#000;">1571</div>
<div class="t" style="left:1141.26px;top:412.44px;font-size:11.6px;line-height:13.92px;color:#000;">Planned</div>
<div class="t" style="left:1149.87px;top:430.06px;font-size:11.4px;line-height:13.68px;color:#000;">2300</div>
<div class="t" style="left:1200.23px;top:345.24px;font-size:11.6px;line-height:13.92px;color:#000;letter-spacing:-0.307px;">Total TD</div>
<div class="t" style="left:1205.22px;top:371.46px;font-size:11.4px;line-height:13.68px;color:#000;">11392</div>
<div class="t" style="left:1199.36px;top:412.44px;font-size:11.6px;line-height:13.92px;color:#000;">Planned</div>
<div class="t" style="left:1207.97px;top:430.06px;font-size:11.4px;line-height:13.68px;color:#000;">5012</div>
<div class="t" style="left:1251.15px;top:345.24px;font-size:11.6px;line-height:13.92px;color:#000;letter-spacing:-0.326px;">Total HSR</div>
<div class="t" style="left:1263.27px;top:371.46px;font-size:11.4px;line-height:13.68px;color:#000;">2250</div>
<div class="t" style="left:1254.66px;top:412.44px;font-size:11.6px;line-height:13.92px;color:#000;">Planned</div>
<div class="t" style="left:1266.44px;top:430.06px;font-size:11.4px;line-height:13.68px;color:#000;">720</div>
<div class="t" style="left:1149.63px;top:395.37px;font-size:11.8px;line-height:14.16px;color:#000;">Previously Planned Loads</div>
<div class="r" style="left:27.00px;top:457.80px;width:1009.40px;height:16.70px;background:#00b0f0;"></div>
<div class="r" style="left:27.00px;top:558.60px;width:1009.40px;height:16.60px;background:#92d050;"></div>
<div class="t" style="left:510.99px;top:460.57px;font-size:10.8px;line-height:12.96px;color:#000;font-weight:bold;letter-spacing:-0.268px;">Week 07</div>
<div class="t" style="left:78.53px;top:478.29px;font-size:10.1px;line-height:12.12px;color:#000;font-weight:bold;letter-spacing:-0.343px;">Monday</div>
<div class="t" style="left:68.75px;top:494.89px;font-size:10.1px;line-height:12.12px;color:#000;font-weight:bold;letter-spacing:0.606px;">25/09/2017</div>
<div class="t" style="left:31.26px;top:511.44px;font-size:10.1px;line-height:12.12px;color:#000;font-weight:bold;letter-spacing:-0.345px;">Mins</div>
<div class="t" style="left:59.58px;top:511.44px;font-size:10.1px;line-height:12.12px;color:#000;font-weight:bold;letter-spacing:-0.467px;">RPE</div>
<div class="t" style="left:84.53px;top:511.44px;font-size:10.1px;line-height:12.12px;color:#000;font-weight:bold;letter-spacing:-0.362px;">Load</div>
<div class="t" style="left:119.62px;top:511.44px;font-size:10.1px;line-height:12.12px;color:#000;font-weight:bold;letter-spacing:-0.606px;">TD</div>
<div class="t" style="left:143.82px;top:511.44px;font-size:10.1px;line-height:12.12px;color:#000;font-weight:bold;letter-spacing:-0.480px;">HSR</div>
<div class="t" style="left:36.35px;top:528.34px;font-size:10.1px;line-height:12.12px;color:#000;font-weight:bold;letter-spacing:0.565px;">57</div>
<div class="t" style="left:66.55px;top:528.34px;font-size:10.1px;line-height:12.12px;color:#000;font-weight:bold;">4</div>
<div class="t" style="left:87.20px;top:528.34px;font-size:10.1px;line-height:12.12px;color:#000;font-weight:bold;letter-spacing:0.424px;">228</div>
<div class="t" style="left:114.25px;top:528.34px;font-size:10.1px;line-height:12.12px;color:#000;font-weight:bold;letter-spacing:0.377px;">1389</div>
<div class="t" style="left:145.15px;top:528.34px;font-size:10.1px;line-height:12.12px;color:#000;font-weight:bold;letter-spacing:0.424px;">710</div>
<div class="t" style="left:93.10px;top:545.39px;font-size:10.1px;line-height:12.12px;color:#000;font-weight:bold;">0</div>
<div class="t" style="left:31.20px;top:562.24px;font-size:10.1px;line-height:12.12px;color:#000;font-weight:bold;letter-spacing:-0.344px;">Total</div>
<div class="t" style="left:87.20px;top:562.24px;font-size:10.1px;line-height:12.12px;color:#000;font-weight:bold;letter-spacing:0.424px;">228</div>
<div class="t" style="left:114.25px;top:562.24px;font-size:10.1px;line-height:12.12px;color:#000;font-weight:bold;letter-spacing:0.377px;">1389</div>
<div class="t" style="left:145.15px;top:562.24px;font-size:10.1px;line-height:12.12px;color:#000;font-weight:bold;letter-spacing:0.424px;">710</div>
<div class="t" style="left:216.84px;top:478.29px;font-size:10.1px;line-height:12.12px;color:#000;font-weight:bold;letter-spacing:-0.302px;">Tuesday</div>
<div class="t" style="left:208.05px;top:494.89px;font-size:10.1px;line-height:12.12px;color:#000;font-weight:bold;letter-spacing:0.606px;">26/09/2017</div>
<div class="t" style="left:170.51px;top:511.44px;font-size:10.1px;line-height:12.12px;color:#000;font-weight:bold;letter-spacing:-0.345px;">Mins</div>
<div class="t" style="left:198.48px;top:511.44px;font-size:10.1px;line-height:12.12px;color:#000;font-weight:bold;letter-spacing:-0.467px;">RPE</div>
<div class="t" style="left:223.63px;top:511.44px;font-size:10.1px;line-height:12.12px;color:#000;font-weight:bold;letter-spacing:-0.362px;">Load</div>
<div class="t" style="left:258.92px;top:511.44px;font-size:10.1px;line-height:12.12px;color:#000;font-weight:bold;letter-spacing:-0.606px;">TD</div>
<div class="t" style="left:282.97px;top:511.44px;font-size:10.1px;line-height:12.12px;color:#000;font-weight:bold;letter-spacing:-0.480px;">HSR</div>
<div class="t" style="left:175.60px;top:528.34px;font-size:10.1px;line-height:12.12px;color:#000;font-weight:bold;letter-spacing:0.565px;">57</div>
<div class="t" style="left:205.45px;top:528.34px;font-size:10.1px;line-height:12.12px;color:#000;font-weight:bold;">8</div>
<div class="t" style="left:226.30px;top:528.34px;font-size:10.1px;line-height:12.12px;color:#000;font-weight:bold;letter-spacing:0.424px;">456</div>
<div class="t" style="left:253.55px;top:528.34px;font-size:10.1px;line-height:12.12px;color:#000;font-weight:bold;letter-spacing:0.377px;">1906</div>
<div class="t" style="left:284.30px;top:528.34px;font-size:10.1px;line-height:12.12px;color:#000;font-weight:bold;letter-spacing:0.424px;">760</div>
<div class="t" style="left:232.20px;top:545.39px;font-size:10.1px;line-height:12.12px;color:#000;font-weight:bold;">0</div>
<div class="t" style="left:170.70px;top:562.24px;font-size:10.1px;line-height:12.12px;color:#000;font-weight:bold;letter-spacing:-0.344px;">Total</div>
<div class="t" style="left:226.30px;top:562.24px;font-size:10.1px;line-height:12.12px;color:#000;font-weight:bold;letter-spacing:0.424px;">456</div>
<div class="t" style="left:253.55px;top:562.24px;font-size:10.1px;line-height:12.12px;color:#000;font-weight:bold;letter-spacing:0.377px;">1906</div>
<div class="t" style="left:284.30px;top:562.24px;font-size:10.1px;line-height:12.12px;color:#000;font-weight:bold;letter-spacing:0.424px;">760</div>
<div class="t" style="left:348.29px;top:478.29px;font-size:10.1px;line-height:12.12px;color:#000;font-weight:bold;letter-spacing:-0.315px;">Wednesday</div>
<div class="t" style="left:347.00px;top:494.89px;font-size:10.1px;line-height:12.12px;color:#000;font-weight:bold;letter-spacing:0.606px;">27/09/2017</div>
<div class="t" style="left:309.41px;top:511.44px;font-size:10.1px;line-height:12.12px;color:#000;font-weight:bold;letter-spacing:-0.345px;">Mins</div>
<div class="t" style="left:337.43px;top:511.44px;font-size:10.1px;line-height:12.12px;color:#000;font-weight:bold;letter-spacing:-0.467px;">RPE</div>
<div class="t" style="left:362.43px;top:511.44px;font-size:10.1px;line-height:12.12px;color:#000;font-weight:bold;letter-spacing:-0.362px;">Load</div>
<div class="t" style="left:397.52px;top:511.44px;font-size:10.1px;line-height:12.12px;color:#000;font-weight:bold;letter-spacing:-0.606px;">TD</div>
<div class="t" style="left:421.77px;top:511.44px;font-size:10.1px;line-height:12.12px;color:#000;font-weight:bold;letter-spacing:-0.480px;">HSR</div>
<div class="t" style="left:314.50px;top:528.34px;font-size:10.1px;line-height:12.12px;color:#000;font-weight:bold;letter-spacing:0.565px;">57</div>
<div class="t" style="left:344.40px;top:528.34px;font-size:10.1px;line-height:12.12px;color:#000;font-weight:bold;">7</div>
<div class="t" style="left:365.10px;top:528.34px;font-size:10.1px;line-height:12.12px;color:#000;font-weight:bold;letter-spacing:0.424px;">399</div>
<div class="t" style="left:392.15px;top:528.34px;font-size:10.1px;line-height:12.12px;color:#000;font-weight:bold;letter-spacing:0.377px;">1488</div>
<div class="t" style="left:423.10px;top:528.34px;font-size:10.1px;line-height:12.12px;color:#000;font-weight:bold;letter-spacing:0.424px;">740</div>
<div class="t" style="left:371.00px;top:545.39px;font-size:10.1px;line-height:12.12px;color:#000;font-weight:bold;">0</div>
<div class="t" style="left:309.80px;top:562.24px;font-size:10.1px;line-height:12.12px;color:#000;font-weight:bold;letter-spacing:-0.344px;">Total</div>
<div class="t" style="left:365.10px;top:562.24px;font-size:10.1px;line-height:12.12px;color:#000;font-weight:bold;letter-spacing:0.424px;">399</div>
<div class="t" style="left:392.15px;top:562.24px;font-size:10.1px;line-height:12.12px;color:#000;font-weight:bold;letter-spacing:0.377px;">1488</div>
<div class="t" style="left:423.10px;top:562.24px;font-size:10.1px;line-height:12.12px;color:#000;font-weight:bold;letter-spacing:0.424px;">740</div>
<div class="t" style="left:501.24px;top:478.29px;font-size:10.1px;line-height:12.12px;color:#000;font-weight:bold;letter-spacing:-0.292px;">Thursday</div>
<div class="t" style="left:494.95px;top:494.89px;font-size:10.1px;line-height:12.12px;color:#000;font-weight:bold;letter-spacing:0.606px;">28/09/2017</div>
<div class="t" style="left:448.46px;top:511.44px;font-size:10.1px;line-height:12.12px;color:#000;font-weight:bold;letter-spacing:-0.345px;">Mins</div>
<div class="t" style="left:476.48px;top:511.44px;font-size:10.1px;line-height:12.12px;color:#000;font-weight:bold;letter-spacing:-0.467px;">RPE</div>
<div class="t" style="left:510.38px;top:511.44px;font-size:10.1px;line-height:12.12px;color:#000;font-weight:bold;letter-spacing:-0.362px;">Load</div>
<div class="t" style="left:554.47px;top:511.44px;font-size:10.1px;line-height:12.12px;color:#000;font-weight:bold;letter-spacing:-0.606px;">TD</div>
<div class="t" style="left:578.72px;top:511.44px;font-size:10.1px;line-height:12.12px;color:#000;font-weight:bold;letter-spacing:-0.480px;">HSR</div>
<div class="t" style="left:453.55px;top:528.34px;font-size:10.1px;line-height:12.12px;color:#000;font-weight:bold;letter-spacing:0.565px;">49</div>
<div class="t" style="left:480.50px;top:528.34px;font-size:10.1px;line-height:12.12px;color:#000;font-weight:bold;letter-spacing:0.565px;">10</div>
<div class="t" style="left:513.05px;top:528.34px;font-size:10.1px;line-height:12.12px;color:#000;font-weight:bold;letter-spacing:0.424px;">490</div>
<div class="t" style="left:549.10px;top:528.34px;font-size:10.1px;line-height:12.12px;color:#000;font-weight:bold;letter-spacing:0.377px;">2723</div>
<div class="t" style="left:580.05px;top:528.34px;font-size:10.1px;line-height:12.12px;color:#000;font-weight:bold;letter-spacing:0.424px;">510</div>
<div class="t" style="left:518.95px;top:545.39px;font-size:10.1px;line-height:12.12px;color:#000;font-weight:bold;">0</div>
<div class="t" style="left:448.60px;top:562.24px;font-size:10.1px;line-height:12.12px;color:#000;font-weight:bold;letter-spacing:-0.344px;">Total</div>
<div class="t" style="left:513.05px;top:562.24px;font-size:10.1px;line-height:12.12px;color:#000;font-weight:bold;letter-spacing:0.424px;">490</div>
<div class="t" style="left:549.10px;top:562.24px;font-size:10.1px;line-height:12.12px;color:#000;font-weight:bold;letter-spacing:0.377px;">2723</div>
<div class="t" style="left:580.05px;top:562.24px;font-size:10.1px;line-height:12.12px;color:#000;font-weight:bold;letter-spacing:0.424px;">510</div>
<div class="t" style="left:661.03px;top:478.29px;font-size:10.1px;line-height:12.12px;color:#000;font-weight:bold;letter-spacing:-0.273px;">Friday</div>
<div class="t" style="left:647.50px;top:494.89px;font-size:10.1px;line-height:12.12px;color:#000;font-weight:bold;letter-spacing:0.606px;">29/09/2017</div>
<div class="t" style="left:605.51px;top:511.44px;font-size:10.1px;line-height:12.12px;color:#000;font-weight:bold;letter-spacing:-0.345px;">Mins</div>
<div class="t" style="left:633.68px;top:511.44px;font-size:10.1px;line-height:12.12px;color:#000;font-weight:bold;letter-spacing:-0.467px;">RPE</div>
<div class="t" style="left:658.43px;top:511.44px;font-size:10.1px;line-height:12.12px;color:#000;font-weight:bold;letter-spacing:-0.362px;">Load</div>
<div class="t" style="left:693.17px;top:511.44px;font-size:10.1px;line-height:12.12px;color:#000;font-weight:bold;letter-spacing:-0.606px;">TD</div>
<div class="t" style="left:722.07px;top:511.44px;font-size:10.1px;line-height:12.12px;color:#000;font-weight:bold;letter-spacing:-0.480px;">HSR</div>
<div class="t" style="left:667.00px;top:528.34px;font-size:10.1px;line-height:12.12px;color:#000;font-weight:bold;">0</div>
<div class="t" style="left:667.00px;top:545.39px;font-size:10.1px;line-height:12.12px;color:#000;font-weight:bold;">0</div>
<div class="t" style="left:605.70px;top:562.24px;font-size:10.1px;line-height:12.12px;color:#000;font-weight:bold;letter-spacing:-0.344px;">Total</div>
<div class="t" style="left:667.00px;top:562.24px;font-size:10.1px;line-height:12.12px;color:#000;font-weight:bold;">0</div>
<div class="t" style="left:696.65px;top:562.24px;font-size:10.1px;line-height:12.12px;color:#000;font-weight:bold;">0</div>
<div class="t" style="left:729.30px;top:562.24px;font-size:10.1px;line-height:12.12px;color:#000;font-weight:bold;">0</div>
<div class="t" style="left:798.41px;top:478.29px;font-size:10.1px;line-height:12.12px;color:#000;font-weight:bold;letter-spacing:-0.278px;">Saturday</div>
<div class="t" style="left:791.05px;top:494.89px;font-size:10.1px;line-height:12.12px;color:#000;font-weight:bold;letter-spacing:0.606px;">30/09/2017</div>
<div class="t" style="left:753.66px;top:511.44px;font-size:10.1px;line-height:12.12px;color:#000;font-weight:bold;letter-spacing:-0.345px;">Mins</div>
<div class="t" style="left:781.58px;top:511.44px;font-size:10.1px;line-height:12.12px;color:#000;font-weight:bold;letter-spacing:-0.467px;">RPE</div>
<div class="t" style="left:806.33px;top:511.44px;font-size:10.1px;line-height:12.12px;color:#000;font-weight:bold;letter-spacing:-0.362px;">Load</div>
<div class="t" style="left:841.57px;top:511.44px;font-size:10.1px;line-height:12.12px;color:#000;font-weight:bold;letter-spacing:-0.606px;">TD</div>
<div class="t" style="left:865.87px;top:511.44px;font-size:10.1px;line-height:12.12px;color:#000;font-weight:bold;letter-spacing:-0.480px;">HSR</div>
<div class="t" style="left:758.75px;top:528.34px;font-size:10.1px;line-height:12.12px;color:#000;font-weight:bold;letter-spacing:0.565px;">47</div>
<div class="t" style="left:788.55px;top:528.34px;font-size:10.1px;line-height:12.12px;color:#000;font-weight:bold;">4</div>
<div class="t" style="left:809.00px;top:528.34px;font-size:10.1px;line-height:12.12px;color:#000;font-weight:bold;letter-spacing:0.424px;">188</div>
<div class="t" style="left:836.20px;top:528.34px;font-size:10.1px;line-height:12.12px;color:#000;font-weight:bold;letter-spacing:0.377px;">1731</div>
<div class="t" style="left:867.20px;top:528.34px;font-size:10.1px;line-height:12.12px;color:#000;font-weight:bold;letter-spacing:0.424px;">290</div>
<div class="t" style="left:814.90px;top:545.39px;font-size:10.1px;line-height:12.12px;color:#000;font-weight:bold;">0</div>
<div class="t" style="left:753.70px;top:562.24px;font-size:10.1px;line-height:12.12px;color:#000;font-weight:bold;letter-spacing:-0.344px;">Total</div>
<div class="t" style="left:809.00px;top:562.24px;font-size:10.1px;line-height:12.12px;color:#000;font-weight:bold;letter-spacing:0.424px;">188</div>
<div class="t" style="left:836.20px;top:562.24px;font-size:10.1px;line-height:12.12px;color:#000;font-weight:bold;letter-spacing:0.377px;">1731</div>
<div class="t" style="left:867.20px;top:562.24px;font-size:10.1px;line-height:12.12px;color:#000;font-weight:bold;letter-spacing:0.424px;">290</div>
<div class="t" style="left:945.08px;top:478.29px;font-size:10.1px;line-height:12.12px;color:#000;font-weight:bold;letter-spacing:-0.328px;">Sunday</div>
<div class="t" style="left:934.50px;top:494.89px;font-size:10.1px;line-height:12.12px;color:#000;font-weight:bold;letter-spacing:0.606px;">01/10/2017</div>
<div class="t" style="left:892.36px;top:511.44px;font-size:10.1px;line-height:12.12px;color:#000;font-weight:bold;letter-spacing:-0.345px;">Mins</div>
<div class="t" style="left:924.88px;top:511.44px;font-size:10.1px;line-height:12.12px;color:#000;font-weight:bold;letter-spacing:-0.467px;">RPE</div>
<div class="t" style="left:954.23px;top:511.44px;font-size:10.1px;line-height:12.12px;color:#000;font-weight:bold;letter-spacing:-0.362px;">Load</div>
<div class="t" style="left:989.32px;top:511.44px;font-size:10.1px;line-height:12.12px;color:#000;font-weight:bold;letter-spacing:-0.606px;">TD</div>
<div class="t" style="left:1013.77px;top:511.44px;font-size:10.1px;line-height:12.12px;color:#000;font-weight:bold;letter-spacing:-0.480px;">HSR</div>
<div class="t" style="left:897.45px;top:528.34px;font-size:10.1px;line-height:12.12px;color:#000;font-weight:bold;letter-spacing:0.565px;">56</div>
<div class="t" style="left:931.85px;top:528.34px;font-size:10.1px;line-height:12.12px;color:#000;font-weight:bold;">8</div>
<div class="t" style="left:956.90px;top:528.34px;font-size:10.1px;line-height:12.12px;color:#000;font-weight:bold;letter-spacing:0.424px;">448</div>
<div class="t" style="left:983.95px;top:528.34px;font-size:10.1px;line-height:12.12px;color:#000;font-weight:bold;letter-spacing:0.377px;">2830</div>
<div class="t" style="left:1015.10px;top:528.34px;font-size:10.1px;line-height:12.12px;color:#000;font-weight:bold;letter-spacing:0.424px;">400</div>
<div class="t" style="left:962.80px;top:545.39px;font-size:10.1px;line-height:12.12px;color:#000;font-weight:bold;">0</div>
<div class="t" style="left:892.80px;top:562.24px;font-size:10.1px;line-height:12.12px;color:#000;font-weight:bold;letter-spacing:-0.344px;">Total</div>
<div class="t" style="left:956.90px;top:562.24px;font-size:10.1px;line-height:12.12px;color:#000;font-weight:bold;letter-spacing:0.424px;">448</div>
<div class="t" style="left:983.95px;top:562.24px;font-size:10.1px;line-height:12.12px;color:#000;font-weight:bold;letter-spacing:0.377px;">2830</div>
<div class="t" style="left:1015.10px;top:562.24px;font-size:10.1px;line-height:12.12px;color:#000;font-weight:bold;letter-spacing:0.424px;">400</div>
<div class="r" style="left:26.00px;top:456.00px;width:1011.00px;height:2.00px;background:#000;"></div>
<div class="r" style="left:26.00px;top:473.00px;width:1011.00px;height:2.00px;background:#000;"></div>
<div class="r" style="left:26.00px;top:557.00px;width:1011.00px;height:2.00px;background:#000;"></div>
<div class="r" style="left:26.00px;top:574.00px;width:1011.00px;height:2.00px;background:#000;"></div>
<div class="r" style="left:26.00px;top:456.00px;width:2.00px;height:120.00px;background:#000;"></div>
<div class="r" style="left:1035.00px;top:456.00px;width:2.00px;height:120.00px;background:#000;"></div>
<div class="r" style="left:165.00px;top:473.00px;width:2.00px;height:103.00px;background:#000;"></div>
<div class="r" style="left:304.00px;top:473.00px;width:2.00px;height:103.00px;background:#000;"></div>
<div class="r" style="left:443.00px;top:473.00px;width:2.00px;height:103.00px;background:#000;"></div>
<div class="r" style="left:600.00px;top:473.00px;width:2.00px;height:86.00px;background:#000;"></div>
<div class="r" style="left:748.00px;top:473.00px;width:2.00px;height:103.00px;background:#000;"></div>
<div class="r" style="left:887.00px;top:473.00px;width:2.00px;height:86.00px;background:#000;"></div>
<div class="r" style="left:1130.20px;top:457.80px;width:175.30px;height:16.70px;background:#a6a6a6;"></div>
<div class="r" style="left:1130.20px;top:474.50px;width:64.70px;height:16.90px;background:#f8cbad;"></div>
<div class="r" style="left:1194.90px;top:474.50px;width:51.50px;height:16.90px;background:#bdd7ee;"></div>
<div class="r" style="left:1246.40px;top:474.50px;width:59.10px;height:16.90px;background:#c6e0b4;"></div>
<div class="r" style="left:1130.20px;top:491.40px;width:175.30px;height:33.10px;background:#a6a6a6;"></div>
<div class="r" style="left:1130.20px;top:524.50px;width:175.30px;height:17.00px;background:#ffff00;"></div>
<div class="r" style="left:1130.20px;top:541.50px;width:175.30px;height:17.10px;background:#a6a6a6;"></div>
<div class="r" style="left:1130.20px;top:558.60px;width:175.30px;height:16.60px;background:#92d050;"></div>
<div class="r" style="left:1129.00px;top:456.00px;width:177.00px;height:2.00px;background:#000;"></div>
<div class="r" style="left:1129.00px;top:473.00px;width:177.00px;height:2.00px;background:#000;"></div>
<div class="r" style="left:1129.00px;top:490.00px;width:177.00px;height:2.00px;background:#000;"></div>
<div class="r" style="left:1129.00px;top:523.00px;width:177.00px;height:2.00px;background:#000;"></div>
<div class="r" style="left:1129.00px;top:540.00px;width:177.00px;height:2.00px;background:#000;"></div>
<div class="r" style="left:1129.00px;top:557.00px;width:177.00px;height:2.00px;background:#000;"></div>
<div class="r" style="left:1129.00px;top:574.00px;width:177.00px;height:2.00px;background:#000;"></div>
<div class="r" style="left:1129.00px;top:456.00px;width:2.00px;height:120.00px;background:#000;"></div>
<div class="r" style="left:1304.00px;top:456.00px;width:2.00px;height:120.00px;background:#000;"></div>
<div class="r" style="left:1193.00px;top:473.00px;width:2.00px;height:52.00px;background:#000;"></div>
<div class="r" style="left:1193.00px;top:540.00px;width:2.00px;height:36.00px;background:#000;"></div>
<div class="r" style="left:1245.00px;top:473.00px;width:2.00px;height:52.00px;background:#000;"></div>
<div class="r" style="left:1245.00px;top:540.00px;width:2.00px;height:36.00px;background:#000;"></div>
<div class="t" style="left:1168.95px;top:458.89px;font-size:11.6px;line-height:13.92px;color:#000;">Athlete 10Week 07</div>
<div class="t" style="left:1137.12px;top:476.49px;font-size:11.6px;line-height:13.92px;color:#000;letter-spacing:-0.297px;">Total Load</div>
<div class="t" style="left:1149.87px;top:502.61px;font-size:11.4px;line-height:13.68px;color:#000;">2209</div>
<div class="t" style="left:1141.26px;top:543.59px;font-size:11.6px;line-height:13.92px;color:#000;">Planned</div>
<div class="t" style="left:1159.38px;top:561.26px;font-size:11.4px;line-height:13.68px;color:#000;">0</div>
<div class="t" style="left:1200.23px;top:476.49px;font-size:11.6px;line-height:13.92px;color:#000;letter-spacing:-0.307px;">Total TD</div>
<div class="t" style="left:1204.80px;top:502.61px;font-size:11.4px;line-height:13.68px;color:#000;">12067</div>
<div class="t" style="left:1199.36px;top:543.59px;font-size:11.6px;line-height:13.92px;color:#000;">Planned</div>
<div class="t" style="left:1217.48px;top:561.26px;font-size:11.4px;line-height:13.68px;color:#000;">0</div>
<div class="t" style="left:1251.15px;top:476.49px;font-size:11.6px;line-height:13.92px;color:#000;letter-spacing:-0.326px;">Total HSR</div>
<div class="t" style="left:1263.27px;top:502.61px;font-size:11.4px;line-height:13.68px;color:#000;">3410</div>
<div class="t" style="left:1254.66px;top:543.59px;font-size:11.6px;line-height:13.92px;color:#000;">Planned</div>
<div class="t" style="left:1272.78px;top:561.26px;font-size:11.4px;line-height:13.68px;color:#000;">0</div>
<div class="t" style="left:1149.63px;top:526.42px;font-size:11.8px;line-height:14.16px;color:#000;">Previously Planned Loads</div>
<div class="r" style="left:27.00px;top:592.50px;width:1009.40px;height:16.90px;background:#00b0f0;"></div>
<div class="r" style="left:27.00px;top:693.40px;width:1009.40px;height:17.10px;background:#92d050;"></div>
<div class="t" style="left:510.99px;top:595.37px;font-size:10.8px;line-height:12.96px;color:#000;font-weight:bold;letter-spacing:-0.268px;">Week 08</div>
<div class="t" style="left:78.53px;top:613.14px;font-size:10.1px;line-height:12.12px;color:#000;font-weight:bold;letter-spacing:-0.343px;">Monday</div>
<div class="t" style="left:68.75px;top:629.64px;font-size:10.1px;line-height:12.12px;color:#000;font-weight:bold;letter-spacing:0.606px;">02/10/2017</div>
<div class="t" style="left:31.26px;top:646.19px;font-size:10.1px;line-height:12.12px;color:#000;font-weight:bold;letter-spacing:-0.345px;">Mins</div>
<div class="t" style="left:59.58px;top:646.19px;font-size:10.1px;line-height:12.12px;color:#000;font-weight:bold;letter-spacing:-0.467px;">RPE</div>
<div class="t" style="left:84.53px;top:646.19px;font-size:10.1px;line-height:12.12px;color:#000;font-weight:bold;letter-spacing:-0.362px;">Load</div>
<div class="t" style="left:119.62px;top:646.19px;font-size:10.1px;line-height:12.12px;color:#000;font-weight:bold;letter-spacing:-0.606px;">TD</div>
<div class="t" style="left:143.82px;top:646.19px;font-size:10.1px;line-height:12.12px;color:#000;font-weight:bold;letter-spacing:-0.480px;">HSR</div>
<div class="t" style="left:36.35px;top:663.09px;font-size:10.1px;line-height:12.12px;color:#000;font-weight:bold;letter-spacing:0.565px;">48</div>
<div class="t" style="left:66.55px;top:663.09px;font-size:10.1px;line-height:12.12px;color:#000;font-weight:bold;">7</div>
<div class="t" style="left:87.20px;top:663.09px;font-size:10.1px;line-height:12.12px;color:#000;font-weight:bold;letter-spacing:0.424px;">336</div>
<div class="t" style="left:114.25px;top:663.09px;font-size:10.1px;line-height:12.12px;color:#000;font-weight:bold;letter-spacing:0.377px;">2159</div>
<div class="t" style="left:145.15px;top:663.09px;font-size:10.1px;line-height:12.12px;color:#000;font-weight:bold;letter-spacing:0.424px;">400</div>
<div class="t" style="left:93.10px;top:680.14px;font-size:10.1px;line-height:12.12px;color:#000;font-weight:bold;">0</div>
<div class="t" style="left:31.20px;top:697.29px;font-size:10.1px;line-height:12.12px;color:#000;font-weight:bold;letter-spacing:-0.344px;">Total</div>
<div class="t" style="left:87.20px;top:697.29px;font-size:10.1px;line-height:12.12px;color:#000;font-weight:bold;letter-spacing:0.424px;">336</div>
<div class="t" style="left:114.25px;top:697.29px;font-size:10.1px;line-height:12.12px;color:#000;font-weight:bold;letter-spacing:0.377px;">2159</div>
<div class="t" style="left:145.15px;top:697.29px;font-size:10.1px;line-height:12.12px;color:#000;font-weight:bold;letter-spacing:0.424px;">400</div>
<div class="t" style="left:216.84px;top:613.14px;font-size:10.1px;line-height:12.12px;color:#000;font-weight:bold;letter-spacing:-0.302px;">Tuesday</div>
<div class="t" style="left:208.05px;top:629.64px;font-size:10.1px;line-height:12.12px;color:#000;font-weight:bold;letter-spacing:0.606px;">03/10/2017</div>
<div class="t" style="left:170.51px;top:646.19px;font-size:10.1px;line-height:12.12px;color:#000;font-weight:bold;letter-spacing:-0.345px;">Mins</div>
<div class="t" style="left:198.48px;top:646.19px;font-size:10.1px;line-height:12.12px;color:#000;font-weight:bold;letter-spacing:-0.467px;">RPE</div>
<div class="t" style="left:223.63px;top:646.19px;font-size:10.1px;line-height:12.12px;color:#000;font-weight:bold;letter-spacing:-0.362px;">Load</div>
<div class="t" style="left:258.92px;top:646.19px;font-size:10.1px;line-height:12.12px;color:#000;font-weight:bold;letter-spacing:-0.606px;">TD</div>
<div class="t" style="left:282.97px;top:646.19px;font-size:10.1px;line-height:12.12px;color:#000;font-weight:bold;letter-spacing:-0.480px;">HSR</div>
<div class="t" style="left:175.60px;top:663.09px;font-size:10.1px;line-height:12.12px;color:#000;font-weight:bold;letter-spacing:0.565px;">58</div>
<div class="t" style="left:205.45px;top:663.09px;font-size:10.1px;line-height:12.12px;color:#000;font-weight:bold;">7</div>
<div class="t" style="left:226.30px;top:663.09px;font-size:10.1px;line-height:12.12px;color:#000;font-weight:bold;letter-spacing:0.424px;">406</div>
<div class="t" style="left:253.55px;top:663.09px;font-size:10.1px;line-height:12.12px;color:#000;font-weight:bold;letter-spacing:0.377px;">2538</div>
<div class="t" style="left:284.30px;top:663.09px;font-size:10.1px;line-height:12.12px;color:#000;font-weight:bold;letter-spacing:0.424px;">760</div>
<div class="t" style="left:232.20px;top:680.14px;font-size:10.1px;line-height:12.12px;color:#000;font-weight:bold;">0</div>
<div class="t" style="left:170.70px;top:697.29px;font-size:10.1px;line-height:12.12px;color:#000;font-weight:bold;letter-spacing:-0.344px;">Total</div>
<div class="t" style="left:226.30px;top:697.29px;font-size:10.1px;line-height:12.12px;color:#000;font-weight:bold;letter-spacing:0.424px;">406</div>
<div class="t" style="left:253.55px;top:697.29px;font-size:10.1px;line-height:12.12px;color:#000;font-weight:bold;letter-spacing:0.377px;">2538</div>
<div class="t" style="left:284.30px;top:697.29px;font-size:10.1px;line-height:12.12px;color:#000;font-weight:bold;letter-spacing:0.424px;">760</div>
<div class="t" style="left:348.29px;top:613.14px;font-size:10.1px;line-height:12.12px;color:#000;font-weight:bold;letter-spacing:-0.315px;">Wednesday</div>
<div class="t" style="left:347.00px;top:629.64px;font-size:10.1px;line-height:12.12px;color:#000;font-weight:bold;letter-spacing:0.606px;">04/10/2017</div>
<div class="t" style="left:309.41px;top:646.19px;font-size:10.1px;line-height:12.12px;color:#000;font-weight:bold;letter-spacing:-0.345px;">Mins</div>
<div class="t" style="left:337.43px;top:646.19px;font-size:10.1px;line-height:12.12px;color:#000;font-weight:bold;letter-spacing:-0.467px;">RPE</div>
<div class="t" style="left:362.43px;top:646.19px;font-size:10.1px;line-height:12.12px;color:#000;font-weight:bold;letter-spacing:-0.362px;">Load</div>
<div class="t" style="left:397.52px;top:646.19px;font-size:10.1px;line-height:12.12px;color:#000;font-weight:bold;letter-spacing:-0.606px;">TD</div>
<div class="t" style="left:421.77px;top:646.19px;font-size:10.1px;line-height:12.12px;color:#000;font-weight:bold;letter-spacing:-0.480px;">HSR</div>
<div class="t" style="left:314.50px;top:663.09px;font-size:10.1px;line-height:12.12px;color:#000;font-weight:bold;letter-spacing:0.565px;">55</div>
<div class="t" style="left:344.40px;top:663.09px;font-size:10.1px;line-height:12.12px;color:#000;font-weight:bold;">8</div>
<div class="t" style="left:365.10px;top:663.09px;font-size:10.1px;line-height:12.12px;color:#000;font-weight:bold;letter-spacing:0.424px;">440</div>
<div class="t" style="left:392.15px;top:663.09px;font-size:10.1px;line-height:12.12px;color:#000;font-weight:bold;letter-spacing:0.377px;">2472</div>
<div class="t" style="left:423.10px;top:663.09px;font-size:10.1px;line-height:12.12px;color:#000;font-weight:bold;letter-spacing:0.424px;">800</div>
<div class="t" style="left:371.00px;top:680.14px;font-size:10.1px;line-height:12.12px;color:#000;font-weight:bold;">0</div>
<div class="t" style="left:309.80px;top:697.29px;font-size:10.1px;line-height:12.12px;color:#000;font-weight:bold;letter-spacing:-0.344px;">Total</div>
<div class="t" style="left:365.10px;top:697.29px;font-size:10.1px;line-height:12.12px;color:#000;font-weight:bold;letter-spacing:0.424px;">440</div>
<div class="t" style="left:392.15px;top:697.29px;font-size:10.1px;line-height:12.12px;color:#000;font-weight:bold;letter-spacing:0.377px;">2472</div>
<div class="t" style="left:423.10px;top:697.29px;font-size:10.1px;line-height:12.12px;color:#000;font-weight:bold;letter-spacing:0.424px;">800</div>
<div class="t" style="left:501.24px;top:613.14px;font-size:10.1px;line-height:12.12px;color:#000;font-weight:bold;letter-spacing:-0.292px;">Thursday</div>
<div class="t" style="left:494.95px;top:629.64px;font-size:10.1px;line-height:12.12px;color:#000;font-weight:bold;letter-spacing:0.606px;">05/10/2017</div>
<div class="t" style="left:448.46px;top:646.19px;font-size:10.1px;line-height:12.12px;color:#000;font-weight:bold;letter-spacing:-0.345px;">Mins</div>
<div class="t" style="left:476.48px;top:646.19px;font-size:10.1px;line-height:12.12px;color:#000;font-weight:bold;letter-spacing:-0.467px;">RPE</div>
<div class="t" style="left:510.38px;top:646.19px;font-size:10.1px;line-height:12.12px;color:#000;font-weight:bold;letter-spacing:-0.362px;">Load</div>
<div class="t" style="left:554.47px;top:646.19px;font-size:10.1px;line-height:12.12px;color:#000;font-weight:bold;letter-spacing:-0.606px;">TD</div>
<div class="t" style="left:578.72px;top:646.19px;font-size:10.1px;line-height:12.12px;color:#000;font-weight:bold;letter-spacing:-0.480px;">HSR</div>
<div class="t" style="left:518.95px;top:663.09px;font-size:10.1px;line-height:12.12px;color:#000;font-weight:bold;">0</div>
<div class="t" style="left:518.95px;top:680.14px;font-size:10.1px;line-height:12.12px;color:#000;font-weight:bold;">0</div>
<div class="t" style="left:448.60px;top:697.29px;font-size:10.1px;line-height:12.12px;color:#000;font-weight:bold;letter-spacing:-0.344px;">Total</div>
<div class="t" style="left:518.95px;top:697.29px;font-size:10.1px;line-height:12.12px;color:#000;font-weight:bold;">0</div>
<div class="t" style="left:557.95px;top:697.29px;font-size:10.1px;line-height:12.12px;color:#000;font-weight:bold;">0</div>
<div class="t" style="left:585.95px;top:697.29px;font-size:10.1px;line-height:12.12px;color:#000;font-weight:bold;">0</div>
<div class="t" style="left:661.03px;top:613.14px;font-size:10.1px;line-height:12.12px;color:#000;font-weight:bold;letter-spacing:-0.273px;">Friday</div>
<div class="t" style="left:647.50px;top:629.64px;font-size:10.1px;line-height:12.12px;color:#000;font-weight:bold;letter-spacing:0.606px;">06/10/2017</div>
<div class="t" style="left:605.51px;top:646.19px;font-size:10.1px;line-height:12.12px;color:#000;font-weight:bold;letter-spacing:-0.345px;">Mins</div>
<div class="t" style="left:633.68px;top:646.19px;font-size:10.1px;line-height:12.12px;color:#000;font-weight:bold;letter-spacing:-0.467px;">RPE</div>
<div class="t" style="left:658.43px;top:646.19px;font-size:10.1px;line-height:12.12px;color:#000;font-weight:bold;letter-spacing:-0.362px;">Load</div>
<div class="t" style="left:693.17px;top:646.19px;font-size:10.1px;line-height:12.12px;color:#000;font-weight:bold;letter-spacing:-0.606px;">TD</div>
<div class="t" style="left:722.07px;top:646.19px;font-size:10.1px;line-height:12.12px;color:#000;font-weight:bold;letter-spacing:-0.480px;">HSR</div>
<div class="t" style="left:610.60px;top:663.09px;font-size:10.1px;line-height:12.12px;color:#000;font-weight:bold;letter-spacing:0.565px;">46</div>
<div class="t" style="left:640.65px;top:663.09px;font-size:10.1px;line-height:12.12px;color:#000;font-weight:bold;">5</div>
<div class="t" style="left:661.10px;top:663.09px;font-size:10.1px;line-height:12.12px;color:#000;font-weight:bold;letter-spacing:0.424px;">230</div>
<div class="t" style="left:687.80px;top:663.09px;font-size:10.1px;line-height:12.12px;color:#000;font-weight:bold;letter-spacing:0.377px;">2517</div>
<div class="t" style="left:723.40px;top:663.09px;font-size:10.1px;line-height:12.12px;color:#000;font-weight:bold;letter-spacing:0.424px;">310</div>
<div class="t" style="left:667.00px;top:680.14px;font-size:10.1px;line-height:12.12px;color:#000;font-weight:bold;">0</div>
<div class="t" style="left:605.70px;top:697.29px;font-size:10.1px;line-height:12.12px;color:#000;font-weight:bold;letter-spacing:-0.344px;">Total</div>
<div class="t" style="left:661.10px;top:697.29px;font-size:10.1px;line-height:12.12px;color:#000;font-weight:bold;letter-spacing:0.424px;">230</div>
<div class="t" style="left:687.80px;top:697.29px;font-size:10.1px;line-height:12.12px;color:#000;font-weight:bold;letter-spacing:0.377px;">2517</div>
<div class="t" style="left:723.40px;top:697.29px;font-size:10.1px;line-height:12.12px;color:#000;font-weight:bold;letter-spacing:0.424px;">310</div>
<div class="t" style="left:798.41px;top:613.14px;font-size:10.1px;line-height:12.12px;color:#000;font-weight:bold;letter-spacing:-0.278px;">Saturday</div>
<div class="t" style="left:791.05px;top:629.64px;font-size:10.1px;line-height:12.12px;color:#000;font-weight:bold;letter-spacing:0.606px;">07/10/2017</div>
<div class="t" style="left:753.66px;top:646.19px;font-size:10.1px;line-height:12.12px;color:#000;font-weight:bold;letter-spacing:-0.345px;">Mins</div>
<div class="t" style="left:781.58px;top:646.19px;font-size:10.1px;line-height:12.12px;color:#000;font-weight:bold;letter-spacing:-0.467px;">RPE</div>
<div class="t" style="left:806.33px;top:646.19px;font-size:10.1px;line-height:12.12px;color:#000;font-weight:bold;letter-spacing:-0.362px;">Load</div>
<div class="t" style="left:841.57px;top:646.19px;font-size:10.1px;line-height:12.12px;color:#000;font-weight:bold;letter-spacing:-0.606px;">TD</div>
<div class="t" style="left:865.87px;top:646.19px;font-size:10.1px;line-height:12.12px;color:#000;font-weight:bold;letter-spacing:-0.480px;">HSR</div>
<div class="t" style="left:758.75px;top:663.09px;font-size:10.1px;line-height:12.12px;color:#000;font-weight:bold;letter-spacing:0.565px;">51</div>
<div class="t" style="left:788.55px;top:663.09px;font-size:10.1px;line-height:12.12px;color:#000;font-weight:bold;">6</div>
<div class="t" style="left:809.00px;top:663.09px;font-size:10.1px;line-height:12.12px;color:#000;font-weight:bold;letter-spacing:0.424px;">306</div>
<div class="t" style="left:836.20px;top:663.09px;font-size:10.1px;line-height:12.12px;color:#000;font-weight:bold;letter-spacing:0.377px;">2932</div>
<div class="t" style="left:867.20px;top:663.09px;font-size:10.1px;line-height:12.12px;color:#000;font-weight:bold;letter-spacing:0.424px;">220</div>
<div class="t" style="left:814.90px;top:680.14px;font-size:10.1px;line-height:12.12px;color:#000;font-weight:bold;">0</div>
<div class="t" style="left:753.70px;top:697.29px;font-size:10.1px;line-height:12.12px;color:#000;font-weight:bold;letter-spacing:-0.344px;">Total</div>
<div class="t" style="left:809.00px;top:697.29px;font-size:10.1px;line-height:12.12px;color:#000;font-weight:bold;letter-spacing:0.424px;">306</div>
<div class="t" style="left:836.20px;top:697.29px;font-size:10.1px;line-height:12.12px;color:#000;font-weight:bold;letter-spacing:0.377px;">2932</div>
<div class="t" style="left:867.20px;top:697.29px;font-size:10.1px;line-height:12.12px;color:#000;font-weight:bold;letter-spacing:0.424px;">220</div>
<div class="t" style="left:945.08px;top:613.14px;font-size:10.1px;line-height:12.12px;color:#000;font-weight:bold;letter-spacing:-0.328px;">Sunday</div>
<div class="t" style="left:934.50px;top:629.64px;font-size:10.1px;line-height:12.12px;color:#000;font-weight:bold;letter-spacing:0.606px;">08/10/2017</div>
<div class="t" style="left:892.36px;top:646.19px;font-size:10.1px;line-height:12.12px;color:#000;font-weight:bold;letter-spacing:-0.345px;">Mins</div>
<div class="t" style="left:924.88px;top:646.19px;font-size:10.1px;line-height:12.12px;color:#000;font-weight:bold;letter-spacing:-0.467px;">RPE</div>
<div class="t" style="left:954.23px;top:646.19px;font-size:10.1px;line-height:12.12px;color:#000;font-weight:bold;letter-spacing:-0.362px;">Load</div>
<div class="t" style="left:989.32px;top:646.19px;font-size:10.1px;line-height:12.12px;color:#000;font-weight:bold;letter-spacing:-0.606px;">TD</div>
<div class="t" style="left:1013.77px;top:646.19px;font-size:10.1px;line-height:12.12px;color:#000;font-weight:bold;letter-spacing:-0.480px;">HSR</div>
<div class="t" style="left:897.45px;top:663.09px;font-size:10.1px;line-height:12.12px;color:#000;font-weight:bold;letter-spacing:0.565px;">57</div>
<div class="t" style="left:931.85px;top:663.09px;font-size:10.1px;line-height:12.12px;color:#000;font-weight:bold;">4</div>
<div class="t" style="left:956.90px;top:663.09px;font-size:10.1px;line-height:12.12px;color:#000;font-weight:bold;letter-spacing:0.424px;">228</div>
<div class="t" style="left:983.95px;top:663.09px;font-size:10.1px;line-height:12.12px;color:#000;font-weight:bold;letter-spacing:0.377px;">2029</div>
<div class="t" style="left:1015.10px;top:663.09px;font-size:10.1px;line-height:12.12px;color:#000;font-weight:bold;letter-spacing:0.424px;">690</div>
<div class="t" style="left:962.80px;top:680.14px;font-size:10.1px;line-height:12.12px;color:#000;font-weight:bold;">0</div>
<div class="t" style="left:892.80px;top:697.29px;font-size:10.1px;line-height:12.12px;color:#000;font-weight:bold;letter-spacing:-0.344px;">Total</div>
<div class="t" style="left:956.90px;top:697.29px;font-size:10.1px;line-height:12.12px;color:#000;font-weight:bold;letter-spacing:0.424px;">228</div>
<div class="t" style="left:983.95px;top:697.29px;font-size:10.1px;line-height:12.12px;color:#000;font-weight:bold;letter-spacing:0.377px;">2029</div>
<div class="t" style="left:1015.10px;top:697.29px;font-size:10.1px;line-height:12.12px;color:#000;font-weight:bold;letter-spacing:0.424px;">690</div>
<div class="r" style="left:26.00px;top:591.00px;width:1011.00px;height:2.00px;background:#000;"></div>
<div class="r" style="left:26.00px;top:608.00px;width:1011.00px;height:2.00px;background:#000;"></div>
<div class="r" style="left:26.00px;top:692.00px;width:1011.00px;height:2.00px;background:#000;"></div>
<div class="r" style="left:26.00px;top:709.00px;width:1011.00px;height:2.00px;background:#000;"></div>
<div class="r" style="left:26.00px;top:591.00px;width:2.00px;height:120.00px;background:#000;"></div>
<div class="r" style="left:1035.00px;top:591.00px;width:2.00px;height:120.00px;background:#000;"></div>
<div class="r" style="left:165.00px;top:608.00px;width:2.00px;height:103.00px;background:#000;"></div>
<div class="r" style="left:304.00px;top:608.00px;width:2.00px;height:103.00px;background:#000;"></div>
<div class="r" style="left:443.00px;top:608.00px;width:2.00px;height:103.00px;background:#000;"></div>
<div class="r" style="left:600.00px;top:608.00px;width:2.00px;height:86.00px;background:#000;"></div>
<div class="r" style="left:748.00px;top:608.00px;width:2.00px;height:103.00px;background:#000;"></div>
<div class="r" style="left:887.00px;top:608.00px;width:2.00px;height:86.00px;background:#000;"></div>
<div class="r" style="left:1130.20px;top:592.50px;width:175.30px;height:16.90px;background:#a6a6a6;"></div>
<div class="r" style="left:1130.20px;top:609.40px;width:64.70px;height:16.80px;background:#f8cbad;"></div>
<div class="r" style="left:1194.90px;top:609.40px;width:51.50px;height:16.80px;background:#bdd7ee;"></div>
<div class="r" style="left:1246.40px;top:609.40px;width:59.10px;height:16.80px;background:#c6e0b4;"></div>
<div class="r" style="left:1130.20px;top:626.20px;width:175.30px;height:33.10px;background:#a6a6a6;"></div>
<div class="r" style="left:1130.20px;top:659.30px;width:175.30px;height:16.90px;background:#ffff00;"></div>
<div class="r" style="left:1130.20px;top:676.20px;width:175.30px;height:17.20px;background:#a6a6a6;"></div>
<div class="r" style="left:1130.20px;top:693.40px;width:175.30px;height:17.10px;background:#92d050;"></div>
<div class="r" style="left:1129.00px;top:591.00px;width:177.00px;height:2.00px;background:#000;"></div>
<div class="r" style="left:1129.00px;top:608.00px;width:177.00px;height:2.00px;background:#000;"></div>
<div class="r" style="left:1129.00px;top:625.00px;width:177.00px;height:2.00px;background:#000;"></div>
<div class="r" style="left:1129.00px;top:658.00px;width:177.00px;height:2.00px;background:#000;"></div>
<div class="r" style="left:1129.00px;top:675.00px;width:177.00px;height:2.00px;background:#000;"></div>
<div class="r" style="left:1129.00px;top:692.00px;width:177.00px;height:2.00px;background:#000;"></div>
<div class="r" style="left:1129.00px;top:709.00px;width:177.00px;height:2.00px;background:#000;"></div>
<div class="r" style="left:1129.00px;top:591.00px;width:2.00px;height:120.00px;background:#000;"></div>
<div class="r" style="left:1304.00px;top:591.00px;width:2.00px;height:120.00px;background:#000;"></div>
<div class="r" style="left:1193.00px;top:608.00px;width:2.00px;height:52.00px;background:#000;"></div>
<div class="r" style="left:1193.00px;top:675.00px;width:2.00px;height:36.00px;background:#000;"></div>
<div class="r" style="left:1245.00px;top:608.00px;width:2.00px;height:52.00px;background:#000;"></div>
<div class="r" style="left:1245.00px;top:675.00px;width:2.00px;height:36.00px;background:#000;"></div>
<div class="t" style="left:1168.95px;top:593.69px;font-size:11.6px;line-height:13.92px;color:#000;">Athlete 10Week 08</div>
<div class="t" style="left:1137.12px;top:611.34px;font-size:11.6px;line-height:13.92px;color:#000;letter-spacing:-0.297px;">Total Load</div>
<div class="t" style="left:1149.87px;top:637.41px;font-size:11.4px;line-height:13.68px;color:#000;">1946</div>
<div class="t" style="left:1141.26px;top:678.34px;font-size:11.6px;line-height:13.92px;color:#000;">Planned</div>
<div class="t" style="left:1159.38px;top:696.31px;font-size:11.4px;line-height:13.68px;color:#000;">0</div>
<div class="t" style="left:1200.23px;top:611.34px;font-size:11.6px;line-height:13.92px;color:#000;letter-spacing:-0.307px;">Total TD</div>
<div class="t" style="left:1204.80px;top:637.41px;font-size:11.4px;line-height:13.68px;color:#000;">14647</div>
<div class="t" style="left:1199.36px;top:678.34px;font-size:11.6px;line-height:13.92px;color:#000;">Planned</div>
<div class="t" style="left:1217.48px;top:696.31px;font-size:11.4px;line-height:13.68px;color:#000;">0</div>
<div class="t" style="left:1251.15px;top:611.34px;font-size:11.6px;line-height:13.92px;color:#000;letter-spacing:-0.326px;">Total HSR</div>
<div class="t" style="left:1263.27px;top:637.41px;font-size:11.4px;line-height:13.68px;color:#000;">3180</div>
<div class="t" style="left:1254.66px;top:678.34px;font-size:11.6px;line-height:13.92px;color:#000;">Planned</div>
<div class="t" style="left:1272.78px;top:696.31px;font-size:11.4px;line-height:13.68px;color:#000;">0</div>
<div class="t" style="left:1149.63px;top:661.17px;font-size:11.8px;line-height:14.16px;color:#000;">Previously Planned Loads</div>
<div class="t" style="left:1044.80px;top:488.62px;font-size:9.8px;line-height:11.76px;color:#000;letter-spacing:0.292px;">Shows proposed</div>
<div class="t" style="left:1042.40px;top:502.92px;font-size:9.8px;line-height:11.76px;color:#000;letter-spacing:0.388px;">planned loads for</div>
<div class="t" style="left:1056.00px;top:516.92px;font-size:9.8px;line-height:11.76px;color:#000;letter-spacing:0.158px;">the week - &gt;</div>
<div class="t" style="left:1047.30px;top:695.72px;font-size:9.8px;line-height:11.76px;color:#000;letter-spacing:0.245px;">Planned loads &gt;</div>
<div class="t" style="left:1049.00px;top:709.52px;font-size:9.8px;line-height:11.76px;color:#000;letter-spacing:0.352px;">uses data from</div>
<div class="r" style="left:0.00px;top:279.00px;width:1344.50px;height:1.00px;background:#a0a0a0;"></div>
<div class="r" style="left:0.00px;top:279.00px;width:22.00px;height:1.00px;background:#6a6a6a;"></div>
<div class="r" style="left:22.00px;top:264.00px;width:1.00px;height:15.00px;background:#5a5a5a;"></div>
<div class="r" style="left:1130.20px;top:277.50px;width:64.70px;height:2.00px;background:#217346;"></div>
<div class="r" style="left:1344.50px;top:264.00px;width:21.50px;height:453.50px;background:#262626;"></div>
<div class="r" style="left:1348.50px;top:266.80px;width:13.90px;height:450.70px;background:#363636;"></div>
<div class="r" style="left:1348.50px;top:266.80px;width:13.90px;height:13.60px;background:#4a4a4a;"></div>
<svg class="r" style="left:1351px;top:270px" width="9" height="6" viewBox="0 0 9 6"><path d="M0 5h9L4.5 0z" fill="#9a9a9a"/></svg>
<div class="r" style="left:1349.50px;top:281.50px;width:11.90px;height:181.00px;background:#4f4f4f;"></div>
<div class="r" style="left:1348.50px;top:704.00px;width:13.90px;height:13.50px;background:#4a4a4a;"></div>
<svg class="r" style="left:1351px;top:708px" width="9" height="6" viewBox="0 0 9 6"><path d="M0 0h9L4.5 5z" fill="#9a9a9a"/></svg>
<div class="r" style="left:0.00px;top:717.50px;width:1366.00px;height:27.50px;background:#262626;"></div>
<div class="r" style="left:0.00px;top:717.00px;width:1344.50px;height:1.00px;background:#808080;"></div>
<svg class="r" style="left:27px;top:727px" width="5" height="8" viewBox="0 0 5 8"><path d="M5 0v8L0 4z" fill="#8a8a8a"/></svg>
<svg class="r" style="left:56px;top:727px" width="5" height="8" viewBox="0 0 5 8"><path d="M0 0v8l5-4z" fill="#8a8a8a"/></svg>
<div class="r" style="left:207.00px;top:719.00px;width:118.00px;height:22.50px;background:#3a3a3a;"></div>
<div class="t" style="left:220.00px;top:723.42px;font-size:11.8px;line-height:14.16px;color:#f0f0f0;letter-spacing:0.744px;">Optimized Data</div>
<div class="r" style="left:326.50px;top:722.00px;width:1.00px;height:17.00px;background:#5a5a5a;"></div>
<div class="r" style="left:329.00px;top:719.00px;width:113.00px;height:22.50px;background:#3a3a3a;"></div>
<div class="t" style="left:340.00px;top:723.42px;font-size:11.8px;line-height:14.16px;color:#f0f0f0;letter-spacing:0.792px;">Load Workings</div>
<div class="r" style="left:443.50px;top:722.00px;width:1.00px;height:17.00px;background:#5a5a5a;"></div>
<div class="r" style="left:445.00px;top:719.00px;width:138.00px;height:22.50px;background:#3a3a3a;"></div>
<div class="t" style="left:458.00px;top:723.42px;font-size:11.8px;line-height:14.16px;color:#f0f0f0;letter-spacing:0.560px;">Planned Load Data</div>
<div class="r" style="left:584.50px;top:722.00px;width:1.00px;height:17.00px;background:#5a5a5a;"></div>
<div class="r" style="left:586.50px;top:719.00px;width:142.50px;height:22.50px;background:#3a3a3a;"></div>
<div class="t" style="left:599.00px;top:723.42px;font-size:11.8px;line-height:14.16px;color:#f0f0f0;letter-spacing:0.705px;">Workload Raw Data</div>
<div class="r" style="left:730.50px;top:722.00px;width:1.00px;height:17.00px;background:#5a5a5a;"></div>
<div class="r" style="left:732.00px;top:719.00px;width:61.00px;height:22.50px;background:#3a3a3a;"></div>
<div class="t" style="left:744.00px;top:723.42px;font-size:11.8px;line-height:14.16px;color:#f0f0f0;letter-spacing:0.638px;">Admin</div>
<div class="r" style="left:794.50px;top:722.00px;width:1.00px;height:17.00px;background:#5a5a5a;"></div>
<div class="r" style="left:100.20px;top:717.50px;width:105.80px;height:24.50px;background:linear-gradient(#f6f6f6 25%,#b4b4b4);box-shadow:inset 2px 0 #fff, inset -2px 0 #fff, inset 0 2px #fff;"></div>
<div class="r" style="left:100.20px;top:740.00px;width:105.80px;height:2.00px;background:#217346;"></div>
<div class="t" style="left:113.00px;top:723.30px;font-size:12px;line-height:14.40px;color:#217346;font-weight:bold;letter-spacing:0.362px;">Load Planner</div>
<svg class="r" style="left:827px;top:722px" width="18" height="18" viewBox="0 0 18 18"><circle cx="9" cy="9" r="7.6" fill="none" stroke="#f0f0f0" stroke-width="1.3"/><path d="M9 5v8M5 9h8" stroke="#f0f0f0" stroke-width="1.6"/></svg>
<div class="r" style="left:1239.00px;top:725.00px;width:2.00px;height:2.00px;background:#e0e0e0;"></div>
<div class="r" style="left:1239.00px;top:730.00px;width:2.00px;height:2.00px;background:#e0e0e0;"></div>
<div class="r" style="left:1239.00px;top:735.00px;width:2.00px;height:2.00px;background:#e0e0e0;"></div>
<div class="r" style="left:1257.00px;top:724.00px;width:90.00px;height:14.00px;background:#2e2e2e;"></div>
<div class="r" style="left:1257.00px;top:724.00px;width:14.00px;height:14.00px;background:#3a3a3a;"></div>
<svg class="r" style="left:1261px;top:727px" width="5" height="8" viewBox="0 0 5 8"><path d="M5 0v8L0 4z" fill="#8a8a8a"/></svg>
<div class="r" style="left:1272.00px;top:724.00px;width:43.00px;height:14.00px;background:#4f4f4f;"></div>
<div class="r" style="left:1333.00px;top:724.00px;width:14.00px;height:14.00px;background:#3a3a3a;"></div>
<svg class="r" style="left:1338px;top:727px" width="5" height="8" viewBox="0 0 5 8"><path d="M0 0v8l5-4z" fill="#8a8a8a"/></svg>
<div class="r" style="left:0.00px;top:745.00px;width:1366.00px;height:23.00px;background:#2a2a2a;"></div>
<div class="r" style="left:0.00px;top:745.00px;width:1366.00px;height:1.00px;background:#3a3a3a;"></div>
<div class="t" style="left:7.40px;top:749.22px;font-size:11.8px;line-height:14.16px;color:#f0f0f0;letter-spacing:-0.928px;">Ready</div>
<svg class="r" style="left:58px;top:749px" width="14" height="14" viewBox="0 0 14 14"><rect x="1" y="0.6" width="12.2" height="12.5" fill="#e0e0e0"/><rect x="2.3" y="4.2" width="9.5" height="7.5" fill="#2a2a2a"/><rect x="1" y="0.6" width="6" height="3.6" fill="#2a2a2a"/><circle cx="2.9" cy="2.9" r="3" fill="#e0e0e0" stroke="#2a2a2a" stroke-width="0.8"/><path d="M6.2 6.4h1.6M9.2 6.4h1.6M3.2 8.4h1.6M6.2 8.4h1.6M9.2 8.4h1.6M3.2 10.5h1.6M6.2 10.5h1.6M9.2 10.5h1.6" stroke="#e0e0e0" stroke-width="1.1"/></svg>
<div class="r" style="left:1074.00px;top:746.00px;width:37.60px;height:20.00px;background:#3c3c3c;"></div>
<svg class="r" style="left:1085px;top:748px" width="14" height="14" viewBox="0 0 14 14"><rect x="0.5" y="0.5" width="13" height="13" fill="none" stroke="#f0f0f0"/><path d="M4.5 0.5v13M9.5 0.5v13M0.5 3.5h13M0.5 6.5h13M0.5 9.5h13" stroke="#f0f0f0"/></svg>
<svg class="r" style="left:1124px;top:749px" width="14" height="14" viewBox="0 0 14 14"><rect x="0.5" y="0.5" width="13" height="13" fill="none" stroke="#f0f0f0"/><rect x="3" y="3" width="8" height="8" fill="none" stroke="#f0f0f0"/><path d="M4.5 5.5h5M4.5 7h5M4.5 8.5h5" stroke="#f0f0f0" stroke-width="0.8"/></svg>
<svg class="r" style="left:1162px;top:749px" width="14" height="14" viewBox="0 0 14 14"><rect x="0.5" y="0.5" width="13" height="13" fill="none" stroke="#f0f0f0"/><rect x="3" y="1" width="3" height="7" fill="#f0f0f0"/><rect x="7.5" y="1" width="3" height="7" fill="#f0f0f0"/></svg>
<div class="r" style="left:1192.00px;top:754.50px;width:7.00px;height:1.50px;background:#f0f0f0;"></div>
<div class="r" style="left:1203.00px;top:755.00px;width:100.00px;height:1.00px;background:#d8d8d8;"></div>
<div class="r" style="left:1241.00px;top:749.00px;width:4.00px;height:12.00px;background:#f0f0f0;"></div>
<div class="r" style="left:1253.00px;top:752.00px;width:1.00px;height:6.00px;background:#d8d8d8;"></div>
<div class="r" style="left:1306.00px;top:754.00px;width:10.00px;height:2.00px;background:#f0f0f0;"></div>
<div class="r" style="left:1310.00px;top:750.00px;width:2.00px;height:10.00px;background:#f0f0f0;"></div>
<div class="t" style="left:1331.00px;top:749.22px;font-size:11.8px;line-height:14.16px;color:#f0f0f0;letter-spacing:-1.309px;">80%</div>
<div class="r" style="left:0.00px;top:766.00px;width:1366.00px;height:2.00px;background:#111;"></div>
<div class="r" style="left:185.00px;top:766.00px;width:33.00px;height:2.00px;background:#3a3a3a;"></div>
</body></html>
